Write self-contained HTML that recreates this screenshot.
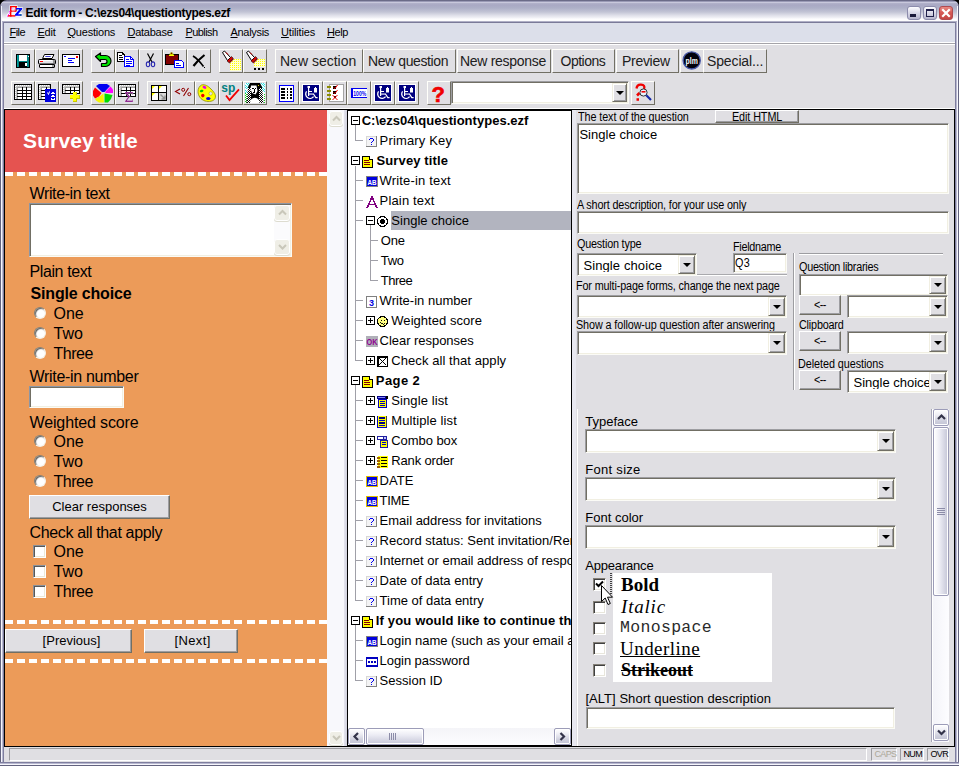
<!DOCTYPE html>
<html><head><meta charset="utf-8"><title>Edit form</title>
<style>
*{box-sizing:border-box;margin:0;padding:0}
html,body{width:959px;height:766px;overflow:hidden}
body{position:relative;background:#e0dfe3;font-family:"Liberation Sans",sans-serif;color:#000;font-size:13px}
.a{position:absolute}
.t{white-space:pre}
svg{display:block;position:absolute;overflow:visible}
.px{shape-rendering:crispEdges}
/* raised toolbar button */
.tb{background:#e0dfe3;border:1px solid;border-color:#fffffa #716f64 #716f64 #fffffa}
/* sunken field */
.sunk{background:#fff;border:1px solid;border-color:#9d9da1 #fbfbf6 #fbfbf6 #9d9da1;box-shadow:inset 1px 1px 0 #716f64, inset -1px -1px 0 #f1efe2}
/* classic raised push button */
.btn{background:#e0dfe3;border:1px solid;border-color:#fff #716f64 #716f64 #fff;box-shadow:inset -1px -1px 0 #9d9da1}
/* combo drop button */
.dd{background:#e0dfe3;border:1px solid;border-color:#f1efe2 #716f64 #716f64 #f1efe2;box-shadow:inset 1px 1px 0 #fff, inset -1px -1px 0 #9d9da1}
.dd:after{content:"";position:absolute;left:50%;top:50%;margin:-2px 0 0 -4px;border:4px solid transparent;border-top:4px solid #000;border-bottom:0;width:0;height:0}
u{text-decoration:underline}

</style></head>
<body>
<div class="a" style="left:0px;top:0px;width:959px;height:8px;background:#000"></div>
<div class="a" style="left:0px;top:0px;width:959px;height:23px;border-radius:7px 7px 0 0;background:linear-gradient(to bottom,#6b6b88 0px,#6b6b88 1px,#9a9ab6 1px,#9a9ab6 2px,#c8c8dc 2px,#c8c8dc 3px,#b2b2cb 3px,#a9a9c4 5px,#aeb0c8 8px,#c2c4d5 12px,#dcdde7 15px,#f2f2f7 18px,#fdfdfe 19px,#fdfdfe 21px,#b0b0c6 21px,#b0b0c6 22px,#7a7a98 22px,#7a7a98 23px)"></div>
<svg class="a" style="left:0;top:0" width="24" height="22" viewBox="0 0 24 22"><path d="M9.5 5.2H17.6V7.2H22.8V9.8L20 12.5H22.2V16.4H15.5V17.2H6.6V15L9.5 11.5Z" fill="#fff" opacity=".92"/><rect x="10" y="6" width="7" height="1.5" fill="#ff0000"/><rect x="10" y="6" width="1.6" height="10.6" fill="#ff0000"/><rect x="15.2" y="7" width="1.5" height="4.4" fill="#ff0000"/><rect x="11" y="10.4" width="5.2" height="1.4" fill="#ff0000"/><rect x="8" y="15.1" width="7.4" height="1.5" fill="#ff0000"/><rect x="11.6" y="7.5" width="3.6" height="2.9" fill="#e6e6ee"/><rect x="11.6" y="11.8" width="3" height="3.3" fill="#f4f4f8"/><rect x="7" y="15.6" width="1" height="1" fill="#ff00ff"/><rect x="8" y="14.2" width="1" height="1" fill="#ff00ff"/><rect x="9" y="12.6" width="1" height="1" fill="#ff00ff"/><rect x="9.3" y="11" width="1" height="1" fill="#ff00ff"/><rect x="11.2" y="8.2" width="1" height="1" fill="#ff00ff"/><rect x="14.6" y="9.4" width="1" height="1" fill="#ff00ff"/><path d="M16 8H22.2V9.3L18 14.2H21.6V15.7H15V14.4L19.3 9.5H16Z" fill="#0000ff"/><rect x="20.2" y="14.3" width="1.2" height="1.4" fill="#008060"/><rect x="16.2" y="9.4" width="1" height="1" fill="#008060"/><rect x="19.6" y="9.5" width="1" height="1" fill="#008060"/></svg>
<div class="a t" style="left:25.5px;top:6.84px;font-size:12px;line-height:12px;font-weight:bold;letter-spacing:-0.32px;">Edit form - C:\ezs04\questiontypes.ezf</div>
<div class="a" style="left:907px;top:6px;width:14px;height:14px;border:1px solid #8c8cac;border-radius:3px;background:linear-gradient(to bottom,#fdfdff 0%,#dcdcea 45%,#b4b4cc 100%)"></div>
<div class="a" style="left:910px;top:14px;width:6px;height:3px;background:#1a1a3a"></div>
<div class="a" style="left:923px;top:6px;width:14px;height:14px;border:1px solid #8c8cac;border-radius:3px;background:linear-gradient(to bottom,#fdfdff 0%,#dcdcea 45%,#b4b4cc 100%)"></div>
<div class="a" style="left:926px;top:9px;width:8px;height:8px;border:1px solid #20204a;border-top-width:2px"></div>
<div class="a" style="left:939px;top:6px;width:14px;height:14px;border:1px solid #b04a50;border-radius:3px;background:linear-gradient(to bottom,#e88a84 0%,#d65a56 45%,#c44442 100%)"></div>
<svg class="a" style="left:942px;top:9px" width="8" height="8" viewBox="0 0 8 8"><path d="M1 1L7 7M7 1L1 7" stroke="#fff" stroke-width="2.2" stroke-linecap="square"/></svg>
<div class="a" style="left:4px;top:23px;width:951px;height:19px;background:#dcdfea"></div>
<div class="a t" style="left:9.5px;top:26.69px;font-size:11px;line-height:11px;color:#000;letter-spacing:-0.55px;"><u>F</u>ile</div>
<div class="a t" style="left:37.5px;top:26.69px;font-size:11px;line-height:11px;color:#000;letter-spacing:-0.25px;"><u>E</u>dit</div>
<div class="a t" style="left:67.5px;top:26.69px;font-size:11px;line-height:11px;color:#000;letter-spacing:-0.22px;"><u>Q</u>uestions</div>
<div class="a t" style="left:127.5px;top:26.69px;font-size:11px;line-height:11px;color:#000;letter-spacing:-0.26px;"><u>D</u>atabase</div>
<div class="a t" style="left:185.5px;top:26.69px;font-size:11px;line-height:11px;color:#000;letter-spacing:-0.58px;"><u>P</u>ublish</div>
<div class="a t" style="left:230.5px;top:26.69px;font-size:11px;line-height:11px;color:#000;letter-spacing:-0.3px;"><u>A</u>nalysis</div>
<div class="a t" style="left:281px;top:26.69px;font-size:11px;line-height:11px;color:#000;letter-spacing:-0.16px;"><u>U</u>tilities</div>
<div class="a t" style="left:327px;top:26.69px;font-size:11px;line-height:11px;color:#000;letter-spacing:-0.4px;"><u>H</u>elp</div>
<div class="a" style="left:4px;top:42px;width:951px;height:1px;background:#fff"></div>
<div class="a" style="left:4px;top:43px;width:951px;height:1px;background:#a4a3a8"></div>
<div class="a" style="left:4px;top:44px;width:951px;height:1px;background:#fff"></div>
<div class="a" style="left:0px;top:5px;width:1px;height:761px;background:#63637f"></div>
<div class="a" style="left:1px;top:6px;width:1px;height:760px;background:#f6f6fc"></div>
<div class="a" style="left:2px;top:22px;width:1px;height:744px;background:#b8b8d0"></div>
<div class="a" style="left:3px;top:22px;width:1px;height:744px;background:#7e7e9e"></div>
<div class="a" style="left:955px;top:22px;width:1px;height:744px;background:#7e7e9e"></div>
<div class="a" style="left:956px;top:22px;width:1px;height:744px;background:#b8b8d0"></div>
<div class="a" style="left:957px;top:6px;width:1px;height:760px;background:#f6f6fc"></div>
<div class="a" style="left:958px;top:5px;width:1px;height:761px;background:#63637f"></div>
<div class="a" style="left:0px;top:762px;width:959px;height:1px;background:#7e7e9e"></div>
<div class="a" style="left:0px;top:763px;width:959px;height:1px;background:#b8b8d0"></div>
<div class="a" style="left:0px;top:764px;width:959px;height:1px;background:#f6f6fc"></div>
<div class="a" style="left:0px;top:765px;width:959px;height:1px;background:#63637f"></div>
<div class="a" style="left:4px;top:747px;width:951px;height:15px;background:#e0dfe3"></div>
<div class="a" style="left:9px;top:748px;width:858px;height:13px;border:1px solid;border-color:#9d9da1 #fff #fff #9d9da1"></div>
<div class="a" style="left:871px;top:748px;width:26px;height:13px;border:1px solid;border-color:#9d9da1 #fff #fff #9d9da1"></div>
<div class="a t" style="left:874.5px;top:749.88px;font-size:9px;line-height:9px;color:#aca899;letter-spacing:-0.65px;">CAPS</div>
<div class="a" style="left:900px;top:748px;width:24px;height:13px;border:1px solid;border-color:#9d9da1 #fff #fff #9d9da1"></div>
<div class="a t" style="left:903.5px;top:749.88px;font-size:9px;line-height:9px;color:#000;letter-spacing:-0.65px;">NUM</div>
<div class="a" style="left:927px;top:748px;width:22px;height:13px;border:1px solid;border-color:#9d9da1 #fff #fff #9d9da1"></div>
<div class="a t" style="left:930.5px;top:749.88px;font-size:9px;line-height:9px;color:#000;letter-spacing:-0.65px;">OVR</div>
<div class="a tb" style="left:11px;top:49px;width:24px;height:24px;"><svg class="px" style="left:-1px;top:-1px" width="24" height="24" viewBox="11 49 24 24"><rect x="16" y="54" width="14" height="14" fill="#000"/><rect x="17" y="55" width="12" height="12" fill="#008484"/><rect x="19" y="55" width="8" height="6" fill="#fff"/><rect x="19" y="62" width="8" height="5" fill="#000"/><rect x="25" y="63" width="2" height="3" fill="#fff"/><rect x="28" y="56" width="1" height="1" fill="#fff"/><rect x="17" y="55" width="1" height="12" fill="#00a0a0"/></svg></div>
<div class="a tb" style="left:35px;top:49px;width:24px;height:24px;"><svg class="" style="left:-1px;top:-1px" width="24" height="24" viewBox="35 49 24 24"><path d="M44.5 54.5H54L52 58.5H42.5Z" fill="#fff" stroke="#000" stroke-width="1" /><path d="M45.5 57L46.5 56L47.5 57L48.5 56L49.5 57L50.5 56" fill="none" stroke="#0000c0" stroke-width="1" /><path d="M39.5 59.5H54.5Q55.5 59.5 55.5 60.5V63Q55.5 64 54.5 64H39.5Q38.5 64 38.5 63V60.5Q38.5 59.5 39.5 59.5Z" fill="#e4e4e8" stroke="#000" stroke-width="1" /><rect x="40" y="60" width="12" height="1" fill="#fff"/><rect x="40" y="61" width="3" height="1" fill="#ff0000"/><rect x="53" y="60" width="2" height="3" fill="#909090"/><path d="M40 64.5H54Q54.5 64.5 54.5 65V67Q54.5 67.5 54 67.5H40Q39.5 67.5 39.5 67V65Q39.5 64.5 40 64.5Z" fill="#fff" stroke="#000" stroke-width="1" /><rect x="52" y="65" width="2" height="2" fill="#a0a0a0"/></svg></div>
<div class="a tb" style="left:59px;top:49px;width:24px;height:24px;"><svg class="px" style="left:-1px;top:-1px" width="24" height="24" viewBox="59 49 24 24"><rect x="62" y="54" width="18" height="13" fill="#000"/><rect x="63" y="55" width="16" height="11" fill="#fff"/><rect x="64" y="56" width="2" height="1" fill="#0000ff"/><rect x="76" y="56" width="2" height="2" fill="#ff0000"/><rect x="68" y="58" width="7" height="1" fill="#0000ff"/><rect x="68" y="60" width="4" height="1" fill="#0000ff"/><rect x="68" y="62" width="6" height="1" fill="#0000ff"/></svg></div>
<div class="a tb" style="left:91px;top:49px;width:24px;height:24px;"><svg class="" style="left:-1px;top:-1px" width="24" height="24" viewBox="91 49 24 24"><path d="M95.5 56.5L100.5 53V55.5H105.5A4.7 4.7 0 0 1 105.5 66.5H101.5V63.5H105A1.9 1.9 0 0 0 105 59.5H100.5V61.5Z" fill="#00e400" stroke="#000" stroke-width="1.2" stroke-linejoin="round"/></svg></div>
<div class="a tb" style="left:115px;top:49px;width:24px;height:24px;"><svg class="" style="left:-1px;top:-1px" width="24" height="24" viewBox="115 49 24 24"><rect x="117" y="52" width="8" height="10" fill="#000"/><rect x="118" y="53" width="6" height="8" fill="#fff"/><path d="M122 52H125V55Z" fill="#e0dfe3" /><path d="M122.5 52.5V54.5H124.5" fill="none" stroke="#000" stroke-width="1" /><path d="M122 52L125 55" fill="none" stroke="#000" stroke-width="1" /><rect x="119" y="55" width="3" height="1" fill="#000"/><rect x="119" y="57" width="4" height="1" fill="#000"/><rect x="119" y="59" width="4" height="1" fill="#000"/><rect x="124" y="56" width="10" height="11" fill="#0000ff"/><rect x="125" y="57" width="8" height="9" fill="#fff"/><path d="M130 56H134V60Z" fill="#e0dfe3" /><path d="M130.5 56.5V59.5H133.5" fill="none" stroke="#0000ff" stroke-width="1" /><path d="M130 56L134 60" fill="none" stroke="#0000ff" stroke-width="1" /><rect x="126" y="59" width="3" height="1" fill="#0000ff"/><rect x="126" y="61" width="6" height="1" fill="#0000ff"/><rect x="126" y="63" width="6" height="1" fill="#0000ff"/><rect x="126" y="65" width="4" height="1" fill="#0000ff"/></svg></div>
<div class="a tb" style="left:139px;top:49px;width:24px;height:24px;"><svg class="" style="left:-1px;top:-1px" width="24" height="24" viewBox="139 49 24 24"><path d="M147.5 53.5L152 62M153.5 53.5L149 62" fill="none" stroke="#000" stroke-width="1.2" /><ellipse cx="148" cy="64.3" rx="1.7" ry="2.4" fill="none" stroke="#2828b0" stroke-width="1.1"/><ellipse cx="153" cy="64.3" rx="1.7" ry="2.4" fill="none" stroke="#2828b0" stroke-width="1.1"/></svg></div>
<div class="a tb" style="left:163px;top:49px;width:24px;height:24px;"><svg class="" style="left:-1px;top:-1px" width="24" height="24" viewBox="163 49 24 24"><rect x="165" y="54" width="14" height="11" fill="#000"/><rect x="166" y="55" width="12" height="9" fill="#800000"/><path d="M169 55L171.5 52L174 55Z" fill="#ffff00" stroke="#606000" stroke-width="0.6" /><rect x="169" y="55" width="5" height="1" fill="#ffff00"/><rect x="171" y="53" width="1" height="1" fill="#800000"/><rect x="174" y="60" width="10" height="8" fill="#0000ff"/><rect x="175" y="61" width="8" height="6" fill="#fff"/><path d="M181 60H184V63Z" fill="#e0dfe3" /><path d="M181 60L184 63" fill="none" stroke="#0000ff" stroke-width="1" /><rect x="176" y="63" width="3" height="1" fill="#0000ff"/><rect x="176" y="65" width="5" height="1" fill="#0000ff"/></svg></div>
<div class="a tb" style="left:187px;top:49px;width:24px;height:24px;"><svg class="" style="left:-1px;top:-1px" width="24" height="24" viewBox="187 49 24 24"><path d="M193 56Q198 59 203.5 66.5" fill="none" stroke="#000" stroke-width="1.6" /><path d="M204.5 55Q198 60 193.5 66" fill="none" stroke="#000" stroke-width="2.2" /><rect x="204" y="67" width="1" height="1" fill="#000"/></svg></div>
<div class="a tb" style="left:219px;top:49px;width:24px;height:24px;"><svg class="" style="left:-1px;top:-1px" width="24" height="24" viewBox="219 49 24 24"><rect x="230" y="59" width="11" height="12" fill="#ffffd0"/><rect x="230" y="59" width="1" height="1" fill="#ffff00"/><rect x="230" y="61" width="1" height="1" fill="#ffff00"/><rect x="230" y="63" width="1" height="1" fill="#ffff00"/><rect x="230" y="65" width="1" height="1" fill="#ffff00"/><rect x="230" y="67" width="1" height="1" fill="#ffff00"/><rect x="230" y="69" width="1" height="1" fill="#ffff00"/><rect x="232" y="59" width="1" height="1" fill="#ffff00"/><rect x="232" y="61" width="1" height="1" fill="#ffff00"/><rect x="232" y="63" width="1" height="1" fill="#ffff00"/><rect x="232" y="65" width="1" height="1" fill="#ffff00"/><rect x="232" y="67" width="1" height="1" fill="#ffff00"/><rect x="232" y="69" width="1" height="1" fill="#ffff00"/><rect x="234" y="59" width="1" height="1" fill="#ffff00"/><rect x="234" y="61" width="1" height="1" fill="#ffff00"/><rect x="234" y="63" width="1" height="1" fill="#ffff00"/><rect x="234" y="65" width="1" height="1" fill="#ffff00"/><rect x="234" y="67" width="1" height="1" fill="#ffff00"/><rect x="234" y="69" width="1" height="1" fill="#ffff00"/><rect x="236" y="59" width="1" height="1" fill="#ffff00"/><rect x="236" y="61" width="1" height="1" fill="#ffff00"/><rect x="236" y="63" width="1" height="1" fill="#ffff00"/><rect x="236" y="65" width="1" height="1" fill="#ffff00"/><rect x="236" y="67" width="1" height="1" fill="#ffff00"/><rect x="236" y="69" width="1" height="1" fill="#ffff00"/><rect x="238" y="59" width="1" height="1" fill="#ffff00"/><rect x="238" y="61" width="1" height="1" fill="#ffff00"/><rect x="238" y="63" width="1" height="1" fill="#ffff00"/><rect x="238" y="65" width="1" height="1" fill="#ffff00"/><rect x="238" y="67" width="1" height="1" fill="#ffff00"/><rect x="238" y="69" width="1" height="1" fill="#ffff00"/><rect x="240" y="59" width="1" height="1" fill="#ffff00"/><rect x="240" y="61" width="1" height="1" fill="#ffff00"/><rect x="240" y="63" width="1" height="1" fill="#ffff00"/><rect x="240" y="65" width="1" height="1" fill="#ffff00"/><rect x="240" y="67" width="1" height="1" fill="#ffff00"/><rect x="240" y="69" width="1" height="1" fill="#ffff00"/><path d="M222.5 52.5L224.5 51L230.5 57.5L227.5 60.5Z" fill="#fff" stroke="#000" stroke-width="1" /><path d="M227 61L231.5 56.5L233 58L229 62.5Z" fill="#e00000" stroke="#000" stroke-width="0.5" /><path d="M229 62.5L233 58L234 59L229.5 63.5Z" fill="#800000" /><path d="M226 52.5L228 54.5" fill="none" stroke="#e00000" stroke-width="1" /></svg></div>
<div class="a tb" style="left:243px;top:49px;width:24px;height:24px;"><svg class="" style="left:-1px;top:-1px" width="24" height="24" viewBox="243 49 24 24"><rect x="254" y="59" width="11" height="12" fill="#ffffd0"/><rect x="254" y="59" width="1" height="1" fill="#ffff00"/><rect x="254" y="61" width="1" height="1" fill="#ffff00"/><rect x="254" y="63" width="1" height="1" fill="#ffff00"/><rect x="254" y="65" width="1" height="1" fill="#ffff00"/><rect x="254" y="67" width="1" height="1" fill="#ffff00"/><rect x="254" y="69" width="1" height="1" fill="#ffff00"/><rect x="256" y="59" width="1" height="1" fill="#ffff00"/><rect x="256" y="61" width="1" height="1" fill="#ffff00"/><rect x="256" y="63" width="1" height="1" fill="#ffff00"/><rect x="256" y="65" width="1" height="1" fill="#ffff00"/><rect x="256" y="67" width="1" height="1" fill="#ffff00"/><rect x="256" y="69" width="1" height="1" fill="#ffff00"/><rect x="258" y="59" width="1" height="1" fill="#ffff00"/><rect x="258" y="61" width="1" height="1" fill="#ffff00"/><rect x="258" y="63" width="1" height="1" fill="#ffff00"/><rect x="258" y="65" width="1" height="1" fill="#ffff00"/><rect x="258" y="67" width="1" height="1" fill="#ffff00"/><rect x="258" y="69" width="1" height="1" fill="#ffff00"/><rect x="260" y="59" width="1" height="1" fill="#ffff00"/><rect x="260" y="61" width="1" height="1" fill="#ffff00"/><rect x="260" y="63" width="1" height="1" fill="#ffff00"/><rect x="260" y="65" width="1" height="1" fill="#ffff00"/><rect x="260" y="67" width="1" height="1" fill="#ffff00"/><rect x="260" y="69" width="1" height="1" fill="#ffff00"/><rect x="262" y="59" width="1" height="1" fill="#ffff00"/><rect x="262" y="61" width="1" height="1" fill="#ffff00"/><rect x="262" y="63" width="1" height="1" fill="#ffff00"/><rect x="262" y="65" width="1" height="1" fill="#ffff00"/><rect x="262" y="67" width="1" height="1" fill="#ffff00"/><rect x="262" y="69" width="1" height="1" fill="#ffff00"/><rect x="264" y="59" width="1" height="1" fill="#ffff00"/><rect x="264" y="61" width="1" height="1" fill="#ffff00"/><rect x="264" y="63" width="1" height="1" fill="#ffff00"/><rect x="264" y="65" width="1" height="1" fill="#ffff00"/><rect x="264" y="67" width="1" height="1" fill="#ffff00"/><rect x="264" y="69" width="1" height="1" fill="#ffff00"/><rect x="254" y="67" width="11" height="4" fill="#e0dfe3"/><path d="M246.5 52.5L248.5 51L254.5 57.5L251.5 60.5Z" fill="#fff" stroke="#000" stroke-width="1" /><path d="M251 61L255.5 56.5L257 58L253 62.5Z" fill="#e00000" stroke="#000" stroke-width="0.5" /><path d="M253 62.5L257 58L258 59L253.5 63.5Z" fill="#800000" /><path d="M250 52.5L252 54.5" fill="none" stroke="#e00000" stroke-width="1" /><rect x="254" y="68" width="2" height="2" fill="#000"/><rect x="258" y="68" width="2" height="2" fill="#000"/><rect x="262" y="68" width="2" height="2" fill="#000"/></svg></div>
<div class="a tb" style="left:11px;top:81px;width:24px;height:24px;"><svg class="px" style="left:-1px;top:-1px" width="24" height="24" viewBox="11 81 24 24"><rect x="14" y="84" width="18" height="16" fill="#000"/><rect x="15" y="85" width="16" height="14" fill="#fff"/><rect x="15" y="85" width="16" height="2" fill="#c4c4c4"/><rect x="15" y="85" width="2" height="14" fill="#c4c4c4"/><rect x="16" y="85" width="1" height="1" fill="#fff"/><rect x="18" y="85" width="1" height="1" fill="#fff"/><rect x="20" y="85" width="1" height="1" fill="#fff"/><rect x="22" y="85" width="1" height="1" fill="#fff"/><rect x="24" y="85" width="1" height="1" fill="#fff"/><rect x="26" y="85" width="1" height="1" fill="#fff"/><rect x="28" y="85" width="1" height="1" fill="#fff"/><rect x="30" y="85" width="1" height="1" fill="#fff"/><rect x="15" y="86" width="1" height="1" fill="#fff"/><rect x="15" y="88" width="1" height="1" fill="#fff"/><rect x="15" y="90" width="1" height="1" fill="#fff"/><rect x="15" y="92" width="1" height="1" fill="#fff"/><rect x="15" y="94" width="1" height="1" fill="#fff"/><rect x="15" y="96" width="1" height="1" fill="#fff"/><rect x="15" y="98" width="1" height="1" fill="#fff"/><rect x="17" y="87" width="1" height="12" fill="#a0a0a0"/><rect x="17" y="87" width="14" height="1" fill="#a0a0a0"/><rect x="22" y="87" width="1" height="12" fill="#000"/><rect x="26" y="87" width="1" height="12" fill="#000"/><rect x="17" y="90" width="14" height="1" fill="#000"/><rect x="17" y="93" width="14" height="1" fill="#000"/><rect x="17" y="96" width="14" height="1" fill="#000"/></svg></div>
<div class="a tb" style="left:35px;top:81px;width:24px;height:24px;"><svg class="" style="left:-1px;top:-1px" width="24" height="24" viewBox="35 81 24 24"><rect x="38" y="84" width="13" height="16" fill="#000"/><rect x="39" y="85" width="11" height="14" fill="#fff"/><rect x="39" y="85" width="11" height="2" fill="#c4c4c4"/><rect x="39" y="85" width="2" height="14" fill="#c4c4c4"/><rect x="40" y="85" width="1" height="1" fill="#fff"/><rect x="42" y="85" width="1" height="1" fill="#fff"/><rect x="44" y="85" width="1" height="1" fill="#fff"/><rect x="46" y="85" width="1" height="1" fill="#fff"/><rect x="48" y="85" width="1" height="1" fill="#fff"/><rect x="39" y="86" width="1" height="1" fill="#fff"/><rect x="39" y="88" width="1" height="1" fill="#fff"/><rect x="39" y="90" width="1" height="1" fill="#fff"/><rect x="39" y="92" width="1" height="1" fill="#fff"/><rect x="39" y="94" width="1" height="1" fill="#fff"/><rect x="39" y="96" width="1" height="1" fill="#fff"/><rect x="39" y="98" width="1" height="1" fill="#fff"/><rect x="41" y="87" width="1" height="12" fill="#a0a0a0"/><rect x="41" y="87" width="9" height="1" fill="#a0a0a0"/><rect x="46" y="87" width="1" height="12" fill="#000"/><rect x="41" y="90" width="9" height="1" fill="#000"/><rect x="41" y="93" width="9" height="1" fill="#000"/><rect x="41" y="96" width="9" height="1" fill="#000"/><rect x="45" y="89" width="11" height="13" fill="#0000e0"/><path d="M47.5 92.5L48.5 94.5L49.5 91.5" fill="none" stroke="#fff" stroke-width="1" /><rect x="51" y="93" width="4" height="1" fill="#fff"/><rect x="52" y="92" width="2" height="1" fill="#fff"/><rect x="51" y="96" width="4" height="1" fill="#fff"/><rect x="52" y="95" width="2" height="1" fill="#fff"/><rect x="51" y="99" width="4" height="1" fill="#fff"/><rect x="51" y="98" width="1" height="1" fill="#fff"/><rect x="54" y="98" width="1" height="1" fill="#fff"/></svg></div>
<div class="a tb" style="left:59px;top:81px;width:24px;height:24px;"><svg class="px" style="left:-1px;top:-1px" width="24" height="24" viewBox="59 81 24 24"><rect x="62" y="84" width="18" height="10" fill="#000"/><rect x="63" y="85" width="16" height="8" fill="#fff"/><rect x="63" y="85" width="16" height="2" fill="#c4c4c4"/><rect x="63" y="85" width="2" height="8" fill="#c4c4c4"/><rect x="64" y="85" width="1" height="1" fill="#fff"/><rect x="66" y="85" width="1" height="1" fill="#fff"/><rect x="68" y="85" width="1" height="1" fill="#fff"/><rect x="70" y="85" width="1" height="1" fill="#fff"/><rect x="72" y="85" width="1" height="1" fill="#fff"/><rect x="74" y="85" width="1" height="1" fill="#fff"/><rect x="76" y="85" width="1" height="1" fill="#fff"/><rect x="78" y="85" width="1" height="1" fill="#fff"/><rect x="63" y="86" width="1" height="1" fill="#fff"/><rect x="63" y="88" width="1" height="1" fill="#fff"/><rect x="63" y="90" width="1" height="1" fill="#fff"/><rect x="63" y="92" width="1" height="1" fill="#fff"/><rect x="65" y="87" width="1" height="6" fill="#a0a0a0"/><rect x="65" y="87" width="14" height="1" fill="#a0a0a0"/><rect x="70" y="87" width="1" height="6" fill="#000"/><rect x="74" y="87" width="1" height="6" fill="#000"/><rect x="65" y="90" width="14" height="1" fill="#000"/><rect x="73" y="92" width="4" height="10" fill="#c8c800"/><rect x="70" y="95" width="10" height="4" fill="#c8c800"/><rect x="73" y="92" width="3" height="9" fill="#ffff00"/><rect x="70" y="95" width="9" height="3" fill="#ffff00"/></svg></div>
<div class="a tb" style="left:91px;top:81px;width:24px;height:24px;"><svg class="" style="left:-1px;top:-1px" width="24" height="24" viewBox="91 81 24 24"><path d="M96 86L99 84H107L110 86L104.5 92H102Z" fill="#0000f0" /><path d="M110.5 86.5L113 89.5V93H106L105 92Z" fill="#ff00ff" /><path d="M95 87.5L101.5 93L99 96.5L95 98.5L93 95.5V91Z" fill="#ff0000" /><path d="M100 96L103.5 93.5L104 102.5H99L96 100.5L95 99Z" fill="#f4f400" /><path d="M104.5 93.5L112.5 95L111 99L108 102.5H104.5Z" fill="#00dc00" /></svg></div>
<div class="a tb" style="left:115px;top:81px;width:24px;height:24px;"><svg class="" style="left:-1px;top:-1px" width="24" height="24" viewBox="115 81 24 24"><rect x="118" y="84" width="18" height="13" fill="#000"/><rect x="119" y="85" width="16" height="11" fill="#fff"/><rect x="119" y="85" width="16" height="2" fill="#c4c4c4"/><rect x="119" y="85" width="2" height="11" fill="#c4c4c4"/><rect x="120" y="85" width="1" height="1" fill="#fff"/><rect x="122" y="85" width="1" height="1" fill="#fff"/><rect x="124" y="85" width="1" height="1" fill="#fff"/><rect x="126" y="85" width="1" height="1" fill="#fff"/><rect x="128" y="85" width="1" height="1" fill="#fff"/><rect x="130" y="85" width="1" height="1" fill="#fff"/><rect x="132" y="85" width="1" height="1" fill="#fff"/><rect x="134" y="85" width="1" height="1" fill="#fff"/><rect x="119" y="86" width="1" height="1" fill="#fff"/><rect x="119" y="88" width="1" height="1" fill="#fff"/><rect x="119" y="90" width="1" height="1" fill="#fff"/><rect x="119" y="92" width="1" height="1" fill="#fff"/><rect x="119" y="94" width="1" height="1" fill="#fff"/><rect x="121" y="87" width="1" height="9" fill="#a0a0a0"/><rect x="121" y="87" width="14" height="1" fill="#a0a0a0"/><rect x="126" y="87" width="1" height="9" fill="#000"/><rect x="130" y="87" width="1" height="9" fill="#000"/><rect x="121" y="90" width="14" height="1" fill="#000"/><rect x="121" y="93" width="14" height="1" fill="#000"/><path d="M125 92H133V94.5H132.3V93.3H127.3L130 96.5L127 100.5H132.3V99.3H133V102H125V101.3L128.3 96.8L125 92.7Z" fill="#800080" stroke="#e0dfe3" stroke-width="0.4" /></svg></div>
<div class="a tb" style="left:147px;top:81px;width:24px;height:24px;"><svg class="" style="left:-1px;top:-1px" width="24" height="24" viewBox="147 81 24 24"><rect x="151" y="85" width="16" height="16" fill="#000"/><rect x="152" y="86" width="6" height="6" fill="#fff"/><rect x="159" y="86" width="7" height="6" fill="#fff"/><rect x="152" y="93" width="6" height="7" fill="#fff"/><rect x="159" y="93" width="7" height="7" fill="#d8d8d8"/><path d="M152 86H155L152 89Z M159 86H162L159 89Z M152 93H155L152 96Z" fill="#ffff00" /><path d="M160.5 94.5L164.5 98.5M165 95.5V99H161.5" fill="none" stroke="#909090" stroke-width="1.4" /></svg></div>
<div class="a tb" style="left:171px;top:81px;width:24px;height:24px;"><svg class="" style="left:-1px;top:-1px" width="24" height="24" viewBox="171 81 24 24"><path d="M180 89L175.5 91.5L180 94" fill="none" stroke="#900000" stroke-width="1.1" /><circle cx="183.2" cy="89.8" r="1.5" fill="none" stroke="#900000" stroke-width="1"/><circle cx="189.3" cy="94.2" r="1.5" fill="none" stroke="#900000" stroke-width="1"/><path d="M188.5 88L183.5 96" fill="none" stroke="#900000" stroke-width="1.1" /></svg></div>
<div class="a tb" style="left:195px;top:81px;width:24px;height:24px;"><svg class="" style="left:-1px;top:-1px" width="24" height="24" viewBox="195 81 24 24"><path d="M201.5 85C205 84 208 86 211 89C214 92 216.5 95 215 98.5C213.5 101.5 209 102 205 101C200.5 99.5 198 95.5 198 91.5C198 88.5 199.5 86 201.5 85Z" fill="#ffff00" stroke="#8c8c00" stroke-width="0.8" /><ellipse cx="204.5" cy="87.3" rx="2" ry="1.4" fill="#e800e8" transform="rotate(25 204.5 87.3)"/><ellipse cx="201.6" cy="91" rx="1.9" ry="1.2" fill="#00c800" transform="rotate(-15 201.6 91)"/><ellipse cx="202.8" cy="95.6" rx="1.7" ry="1.8" fill="#f00000"/><ellipse cx="208.3" cy="98.6" rx="2.2" ry="1.5" fill="#0000f0"/><ellipse cx="210.7" cy="93.5" rx="1.7" ry="1.8" fill="#e4e4ec" stroke="#a0a000" stroke-width=".5"/></svg></div>
<div class="a tb" style="left:219px;top:81px;width:24px;height:24px;"><svg class="" style="left:-1px;top:-1px" width="24" height="24" viewBox="219 81 24 24"><text x="221.3" y="91.6" font-family="Liberation Sans" font-weight="bold" font-size="12.5" fill="#008080" textLength="14" lengthAdjust="spacingAndGlyphs">sp</text><path d="M226 95.5L229.5 100L239 89.3" fill="none" stroke="#f00000" stroke-width="1.8" /></svg></div>
<div class="a tb" style="left:243px;top:81px;width:24px;height:24px;"><svg class="" style="left:-1px;top:-1px" width="24" height="24" viewBox="243 81 24 24"><rect x="245" y="83" width="20" height="20" fill="#f4fbfb"/><rect x="245" y="85" width="1" height="1" fill="#30e0e0"/><rect x="245" y="87" width="1" height="1" fill="#30e0e0"/><rect x="245" y="90" width="1" height="1" fill="#30e0e0"/><rect x="245" y="92" width="1" height="1" fill="#30e0e0"/><rect x="246" y="83" width="1" height="1" fill="#30e0e0"/><rect x="246" y="86" width="1" height="1" fill="#30e0e0"/><rect x="246" y="88" width="1" height="1" fill="#30e0e0"/><rect x="246" y="91" width="1" height="1" fill="#30e0e0"/><rect x="247" y="84" width="1" height="1" fill="#30e0e0"/><rect x="247" y="87" width="1" height="1" fill="#30e0e0"/><rect x="247" y="89" width="1" height="1" fill="#30e0e0"/><rect x="247" y="92" width="1" height="1" fill="#30e0e0"/><rect x="248" y="83" width="1" height="1" fill="#30e0e0"/><rect x="248" y="85" width="1" height="1" fill="#30e0e0"/><rect x="248" y="88" width="1" height="1" fill="#30e0e0"/><rect x="248" y="90" width="1" height="1" fill="#30e0e0"/><rect x="249" y="84" width="1" height="1" fill="#30e0e0"/><rect x="249" y="86" width="1" height="1" fill="#30e0e0"/><rect x="249" y="89" width="1" height="1" fill="#30e0e0"/><rect x="249" y="91" width="1" height="1" fill="#30e0e0"/><rect x="250" y="85" width="1" height="1" fill="#30e0e0"/><rect x="250" y="87" width="1" height="1" fill="#30e0e0"/><rect x="250" y="90" width="1" height="1" fill="#30e0e0"/><rect x="250" y="92" width="1" height="1" fill="#30e0e0"/><rect x="251" y="83" width="1" height="1" fill="#30e0e0"/><rect x="251" y="86" width="1" height="1" fill="#30e0e0"/><rect x="251" y="88" width="1" height="1" fill="#30e0e0"/><rect x="251" y="91" width="1" height="1" fill="#30e0e0"/><rect x="252" y="84" width="1" height="1" fill="#30e0e0"/><rect x="252" y="87" width="1" height="1" fill="#30e0e0"/><rect x="252" y="89" width="1" height="1" fill="#30e0e0"/><rect x="252" y="92" width="1" height="1" fill="#30e0e0"/><rect x="253" y="83" width="1" height="1" fill="#30e0e0"/><rect x="253" y="85" width="1" height="1" fill="#30e0e0"/><rect x="253" y="88" width="1" height="1" fill="#30e0e0"/><rect x="253" y="90" width="1" height="1" fill="#30e0e0"/><rect x="254" y="84" width="1" height="1" fill="#30e0e0"/><rect x="254" y="86" width="1" height="1" fill="#30e0e0"/><rect x="254" y="89" width="1" height="1" fill="#30e0e0"/><rect x="254" y="91" width="1" height="1" fill="#30e0e0"/><rect x="255" y="85" width="1" height="1" fill="#30e0e0"/><rect x="255" y="87" width="1" height="1" fill="#30e0e0"/><rect x="255" y="90" width="1" height="1" fill="#30e0e0"/><rect x="255" y="92" width="1" height="1" fill="#30e0e0"/><rect x="256" y="83" width="1" height="1" fill="#30e0e0"/><rect x="256" y="86" width="1" height="1" fill="#30e0e0"/><rect x="256" y="88" width="1" height="1" fill="#30e0e0"/><rect x="256" y="91" width="1" height="1" fill="#30e0e0"/><rect x="257" y="84" width="1" height="1" fill="#30e0e0"/><rect x="257" y="87" width="1" height="1" fill="#30e0e0"/><rect x="257" y="89" width="1" height="1" fill="#30e0e0"/><rect x="257" y="92" width="1" height="1" fill="#30e0e0"/><rect x="258" y="83" width="1" height="1" fill="#30e0e0"/><rect x="258" y="85" width="1" height="1" fill="#30e0e0"/><rect x="258" y="88" width="1" height="1" fill="#30e0e0"/><rect x="258" y="90" width="1" height="1" fill="#30e0e0"/><rect x="259" y="84" width="1" height="1" fill="#30e0e0"/><rect x="259" y="86" width="1" height="1" fill="#30e0e0"/><rect x="259" y="89" width="1" height="1" fill="#30e0e0"/><rect x="259" y="91" width="1" height="1" fill="#30e0e0"/><rect x="260" y="85" width="1" height="1" fill="#30e0e0"/><rect x="260" y="87" width="1" height="1" fill="#30e0e0"/><rect x="260" y="90" width="1" height="1" fill="#30e0e0"/><rect x="260" y="92" width="1" height="1" fill="#30e0e0"/><rect x="261" y="83" width="1" height="1" fill="#30e0e0"/><rect x="261" y="86" width="1" height="1" fill="#30e0e0"/><rect x="261" y="88" width="1" height="1" fill="#30e0e0"/><rect x="261" y="91" width="1" height="1" fill="#30e0e0"/><rect x="262" y="84" width="1" height="1" fill="#30e0e0"/><rect x="262" y="87" width="1" height="1" fill="#30e0e0"/><rect x="262" y="89" width="1" height="1" fill="#30e0e0"/><rect x="262" y="92" width="1" height="1" fill="#30e0e0"/><rect x="263" y="83" width="1" height="1" fill="#30e0e0"/><rect x="263" y="85" width="1" height="1" fill="#30e0e0"/><rect x="263" y="88" width="1" height="1" fill="#30e0e0"/><rect x="263" y="90" width="1" height="1" fill="#30e0e0"/><rect x="264" y="84" width="1" height="1" fill="#30e0e0"/><rect x="264" y="86" width="1" height="1" fill="#30e0e0"/><rect x="264" y="89" width="1" height="1" fill="#30e0e0"/><rect x="264" y="91" width="1" height="1" fill="#30e0e0"/><rect x="245" y="93" width="1" height="1" fill="#20d020"/><rect x="245" y="95" width="1" height="1" fill="#20d020"/><rect x="245" y="97" width="1" height="1" fill="#20d020"/><rect x="245" y="99" width="1" height="1" fill="#20d020"/><rect x="245" y="101" width="1" height="1" fill="#20d020"/><rect x="246" y="94" width="1" height="1" fill="#20d020"/><rect x="246" y="96" width="1" height="1" fill="#20d020"/><rect x="246" y="98" width="1" height="1" fill="#20d020"/><rect x="246" y="100" width="1" height="1" fill="#20d020"/><rect x="246" y="102" width="1" height="1" fill="#20d020"/><rect x="247" y="93" width="1" height="1" fill="#20d020"/><rect x="247" y="95" width="1" height="1" fill="#20d020"/><rect x="247" y="97" width="1" height="1" fill="#20d020"/><rect x="247" y="99" width="1" height="1" fill="#20d020"/><rect x="247" y="101" width="1" height="1" fill="#20d020"/><rect x="248" y="94" width="1" height="1" fill="#20d020"/><rect x="248" y="96" width="1" height="1" fill="#20d020"/><rect x="248" y="98" width="1" height="1" fill="#20d020"/><rect x="248" y="100" width="1" height="1" fill="#20d020"/><rect x="248" y="102" width="1" height="1" fill="#20d020"/><rect x="249" y="93" width="1" height="1" fill="#20d020"/><rect x="249" y="95" width="1" height="1" fill="#20d020"/><rect x="249" y="97" width="1" height="1" fill="#20d020"/><rect x="249" y="99" width="1" height="1" fill="#20d020"/><rect x="249" y="101" width="1" height="1" fill="#20d020"/><rect x="250" y="94" width="1" height="1" fill="#20d020"/><rect x="250" y="96" width="1" height="1" fill="#20d020"/><rect x="250" y="98" width="1" height="1" fill="#20d020"/><rect x="250" y="100" width="1" height="1" fill="#20d020"/><rect x="250" y="102" width="1" height="1" fill="#20d020"/><rect x="251" y="93" width="1" height="1" fill="#20d020"/><rect x="251" y="95" width="1" height="1" fill="#20d020"/><rect x="251" y="97" width="1" height="1" fill="#20d020"/><rect x="251" y="99" width="1" height="1" fill="#20d020"/><rect x="251" y="101" width="1" height="1" fill="#20d020"/><rect x="252" y="94" width="1" height="1" fill="#20d020"/><rect x="252" y="96" width="1" height="1" fill="#20d020"/><rect x="252" y="98" width="1" height="1" fill="#20d020"/><rect x="252" y="100" width="1" height="1" fill="#20d020"/><rect x="252" y="102" width="1" height="1" fill="#20d020"/><rect x="253" y="93" width="1" height="1" fill="#20d020"/><rect x="253" y="95" width="1" height="1" fill="#20d020"/><rect x="253" y="97" width="1" height="1" fill="#20d020"/><rect x="253" y="99" width="1" height="1" fill="#20d020"/><rect x="253" y="101" width="1" height="1" fill="#20d020"/><rect x="254" y="94" width="1" height="1" fill="#20d020"/><rect x="254" y="96" width="1" height="1" fill="#20d020"/><rect x="254" y="98" width="1" height="1" fill="#20d020"/><rect x="254" y="100" width="1" height="1" fill="#20d020"/><rect x="254" y="102" width="1" height="1" fill="#20d020"/><rect x="255" y="93" width="1" height="1" fill="#20d020"/><rect x="255" y="95" width="1" height="1" fill="#20d020"/><rect x="255" y="97" width="1" height="1" fill="#20d020"/><rect x="255" y="99" width="1" height="1" fill="#20d020"/><rect x="255" y="101" width="1" height="1" fill="#20d020"/><rect x="256" y="94" width="1" height="1" fill="#20d020"/><rect x="256" y="96" width="1" height="1" fill="#20d020"/><rect x="256" y="98" width="1" height="1" fill="#20d020"/><rect x="256" y="100" width="1" height="1" fill="#20d020"/><rect x="256" y="102" width="1" height="1" fill="#20d020"/><rect x="257" y="93" width="1" height="1" fill="#20d020"/><rect x="257" y="95" width="1" height="1" fill="#20d020"/><rect x="257" y="97" width="1" height="1" fill="#20d020"/><rect x="257" y="99" width="1" height="1" fill="#20d020"/><rect x="257" y="101" width="1" height="1" fill="#20d020"/><rect x="258" y="94" width="1" height="1" fill="#20d020"/><rect x="258" y="96" width="1" height="1" fill="#20d020"/><rect x="258" y="98" width="1" height="1" fill="#20d020"/><rect x="258" y="100" width="1" height="1" fill="#20d020"/><rect x="258" y="102" width="1" height="1" fill="#20d020"/><rect x="259" y="93" width="1" height="1" fill="#20d020"/><rect x="259" y="95" width="1" height="1" fill="#20d020"/><rect x="259" y="97" width="1" height="1" fill="#20d020"/><rect x="259" y="99" width="1" height="1" fill="#20d020"/><rect x="259" y="101" width="1" height="1" fill="#20d020"/><rect x="260" y="94" width="1" height="1" fill="#20d020"/><rect x="260" y="96" width="1" height="1" fill="#20d020"/><rect x="260" y="98" width="1" height="1" fill="#20d020"/><rect x="260" y="100" width="1" height="1" fill="#20d020"/><rect x="260" y="102" width="1" height="1" fill="#20d020"/><rect x="261" y="93" width="1" height="1" fill="#20d020"/><rect x="261" y="95" width="1" height="1" fill="#20d020"/><rect x="261" y="97" width="1" height="1" fill="#20d020"/><rect x="261" y="99" width="1" height="1" fill="#20d020"/><rect x="261" y="101" width="1" height="1" fill="#20d020"/><rect x="262" y="94" width="1" height="1" fill="#20d020"/><rect x="262" y="96" width="1" height="1" fill="#20d020"/><rect x="262" y="98" width="1" height="1" fill="#20d020"/><rect x="262" y="100" width="1" height="1" fill="#20d020"/><rect x="262" y="102" width="1" height="1" fill="#20d020"/><rect x="263" y="93" width="1" height="1" fill="#20d020"/><rect x="263" y="95" width="1" height="1" fill="#20d020"/><rect x="263" y="97" width="1" height="1" fill="#20d020"/><rect x="263" y="99" width="1" height="1" fill="#20d020"/><rect x="263" y="101" width="1" height="1" fill="#20d020"/><rect x="264" y="94" width="1" height="1" fill="#20d020"/><rect x="264" y="96" width="1" height="1" fill="#20d020"/><rect x="264" y="98" width="1" height="1" fill="#20d020"/><rect x="264" y="100" width="1" height="1" fill="#20d020"/><rect x="264" y="102" width="1" height="1" fill="#20d020"/><path d="M250 83H260L262 87L263.5 103H246.5L248 87Z" fill="#000" /><rect x="247" y="89" width="1" height="1" fill="#fff"/><rect x="247" y="91" width="1" height="1" fill="#fff"/><rect x="247" y="93" width="1" height="1" fill="#fff"/><rect x="247" y="95" width="1" height="1" fill="#fff"/><rect x="247" y="97" width="1" height="1" fill="#fff"/><rect x="247" y="99" width="1" height="1" fill="#fff"/><rect x="247" y="101" width="1" height="1" fill="#fff"/><rect x="248" y="88" width="1" height="1" fill="#fff"/><rect x="248" y="90" width="1" height="1" fill="#fff"/><rect x="248" y="92" width="1" height="1" fill="#fff"/><rect x="248" y="94" width="1" height="1" fill="#fff"/><rect x="248" y="96" width="1" height="1" fill="#fff"/><rect x="248" y="98" width="1" height="1" fill="#fff"/><rect x="248" y="100" width="1" height="1" fill="#fff"/><rect x="248" y="102" width="1" height="1" fill="#fff"/><rect x="249" y="89" width="1" height="1" fill="#fff"/><rect x="249" y="91" width="1" height="1" fill="#fff"/><rect x="249" y="93" width="1" height="1" fill="#fff"/><rect x="249" y="95" width="1" height="1" fill="#fff"/><rect x="249" y="97" width="1" height="1" fill="#fff"/><rect x="249" y="99" width="1" height="1" fill="#fff"/><rect x="249" y="101" width="1" height="1" fill="#fff"/><rect x="250" y="88" width="1" height="1" fill="#fff"/><rect x="250" y="90" width="1" height="1" fill="#fff"/><rect x="250" y="92" width="1" height="1" fill="#fff"/><rect x="250" y="94" width="1" height="1" fill="#fff"/><rect x="250" y="96" width="1" height="1" fill="#fff"/><rect x="250" y="98" width="1" height="1" fill="#fff"/><rect x="250" y="100" width="1" height="1" fill="#fff"/><rect x="250" y="102" width="1" height="1" fill="#fff"/><rect x="259" y="89" width="1" height="1" fill="#fff"/><rect x="259" y="91" width="1" height="1" fill="#fff"/><rect x="259" y="93" width="1" height="1" fill="#fff"/><rect x="259" y="95" width="1" height="1" fill="#fff"/><rect x="259" y="97" width="1" height="1" fill="#fff"/><rect x="259" y="99" width="1" height="1" fill="#fff"/><rect x="259" y="101" width="1" height="1" fill="#fff"/><rect x="260" y="88" width="1" height="1" fill="#fff"/><rect x="260" y="90" width="1" height="1" fill="#fff"/><rect x="260" y="92" width="1" height="1" fill="#fff"/><rect x="260" y="94" width="1" height="1" fill="#fff"/><rect x="260" y="96" width="1" height="1" fill="#fff"/><rect x="260" y="98" width="1" height="1" fill="#fff"/><rect x="260" y="100" width="1" height="1" fill="#fff"/><rect x="260" y="102" width="1" height="1" fill="#fff"/><rect x="261" y="89" width="1" height="1" fill="#fff"/><rect x="261" y="91" width="1" height="1" fill="#fff"/><rect x="261" y="93" width="1" height="1" fill="#fff"/><rect x="261" y="95" width="1" height="1" fill="#fff"/><rect x="261" y="97" width="1" height="1" fill="#fff"/><rect x="261" y="99" width="1" height="1" fill="#fff"/><rect x="261" y="101" width="1" height="1" fill="#fff"/><rect x="262" y="88" width="1" height="1" fill="#fff"/><rect x="262" y="90" width="1" height="1" fill="#fff"/><rect x="262" y="92" width="1" height="1" fill="#fff"/><rect x="262" y="94" width="1" height="1" fill="#fff"/><rect x="262" y="96" width="1" height="1" fill="#fff"/><rect x="262" y="98" width="1" height="1" fill="#fff"/><rect x="262" y="100" width="1" height="1" fill="#fff"/><rect x="262" y="102" width="1" height="1" fill="#fff"/><rect x="263" y="89" width="1" height="1" fill="#fff"/><rect x="263" y="91" width="1" height="1" fill="#fff"/><rect x="263" y="93" width="1" height="1" fill="#fff"/><rect x="263" y="95" width="1" height="1" fill="#fff"/><rect x="263" y="97" width="1" height="1" fill="#fff"/><rect x="263" y="99" width="1" height="1" fill="#fff"/><rect x="263" y="101" width="1" height="1" fill="#fff"/><path d="M251 85.5H256.5L257.5 91L255.5 94.5L252 93L250.5 89Z" fill="#fff" /><path d="M250.5 100Q255 95.5 259 100L259.5 103H250Z" fill="#fff" /><rect x="252" y="88" width="2" height="1" fill="#000"/><rect x="255" y="88" width="1" height="1" fill="#000"/><rect x="254" y="89" width="1" height="3" fill="#000"/><rect x="253" y="92" width="2" height="1" fill="#000"/><rect x="258" y="85" width="1" height="1" fill="#e0e000"/></svg></div>
<div class="a tb" style="left:275px;top:81px;width:24px;height:24px;"><svg class="px" style="left:-1px;top:-1px" width="24" height="24" viewBox="275 81 24 24"><rect x="279" y="85" width="15" height="17" fill="#0000ff"/><rect x="280" y="86" width="13" height="15" fill="#fff"/><rect x="281" y="88" width="4" height="2" fill="#000"/><rect x="287" y="88" width="1" height="2" fill="#000"/><rect x="290" y="88" width="2" height="2" fill="#000"/><rect x="281" y="91" width="4" height="2" fill="#000"/><rect x="287" y="91" width="1" height="2" fill="#000"/><rect x="290" y="91" width="2" height="2" fill="#000"/><rect x="281" y="94" width="4" height="2" fill="#000"/><rect x="287" y="94" width="1" height="2" fill="#000"/><rect x="290" y="94" width="2" height="2" fill="#000"/><rect x="281" y="97" width="4" height="2" fill="#000"/><rect x="287" y="97" width="1" height="2" fill="#000"/><rect x="290" y="97" width="2" height="2" fill="#000"/></svg></div>
<div class="a tb" style="left:299px;top:81px;width:24px;height:24px;"><svg class="" style="left:-1px;top:-1px" width="24" height="24" viewBox="299 81 24 24"><rect x="302" y="84" width="18" height="18" fill="#fff"/><rect x="303" y="85" width="16" height="16" fill="#000080"/><rect x="307.5" y="86" width="2.5" height="2" fill="#fff"/><rect x="308" y="88" width="1.2" height="8" fill="#fff"/><rect x="308" y="91" width="4" height="1" fill="#fff"/><rect x="308" y="93.5" width="6" height="1.1" fill="#fff"/><path d="M313.5 94L315.8 97.6H317.6" fill="none" stroke="#fff" stroke-width="1.2" /><rect x="314" y="88" width="3" height="4.5" fill="#fff"/><rect x="315" y="87" width="1" height="1" fill="#fff"/><path d="M306.6 91.3A4.3 4.3 0 1 0 313.6 96.6" fill="none" stroke="#fff" stroke-width="1.3" /></svg></div>
<div class="a tb" style="left:323px;top:81px;width:24px;height:24px;"><svg class="" style="left:-1px;top:-1px" width="24" height="24" viewBox="323 81 24 24"><rect x="329" y="84" width="15" height="18" fill="#a4a4a4"/><rect x="330" y="85" width="13" height="16" fill="#fff"/><rect x="327" y="86" width="4" height="2" fill="#8c8c00"/><rect x="327" y="90" width="4" height="2" fill="#8c8c00"/><rect x="327" y="94" width="4" height="2" fill="#8c8c00"/><rect x="327" y="98" width="4" height="2" fill="#8c8c00"/><rect x="333" y="86" width="3" height="3" fill="#000"/><rect x="333" y="91" width="3" height="3" fill="#000"/><rect x="334" y="96" width="2" height="2" fill="#000"/><path d="M333.5 87.5L335 88.5L337.5 85M333.5 92.5L335 93.5L337.5 90M332.5 95L337.5 100M337.5 95L332.5 100" fill="none" stroke="#f00000" stroke-width="1" /></svg></div>
<div class="a tb" style="left:347px;top:81px;width:24px;height:24px;"><svg class="" style="left:-1px;top:-1px" width="24" height="24" viewBox="347 81 24 24"><rect x="351" y="88" width="16" height="10" fill="#0000f0"/><rect x="353" y="89" width="14" height="8" fill="#fff"/><text x="353.3" y="96" font-family="Liberation Sans" font-weight="bold" font-size="7.2" fill="#0000f0" textLength="13" lengthAdjust="spacingAndGlyphs">100%</text></svg></div>
<div class="a tb" style="left:371px;top:81px;width:24px;height:24px;"><svg class="" style="left:-1px;top:-1px" width="24" height="24" viewBox="371 81 24 24"><rect x="374" y="84" width="18" height="18" fill="#fff"/><rect x="375" y="85" width="16" height="16" fill="#000080"/><rect x="379.5" y="86" width="2.5" height="2" fill="#fff"/><rect x="380" y="88" width="1.2" height="8" fill="#fff"/><rect x="380" y="91" width="4" height="1" fill="#fff"/><rect x="380" y="93.5" width="6" height="1.1" fill="#fff"/><path d="M385.5 94L387.8 97.6H389.6" fill="none" stroke="#fff" stroke-width="1.2" /><rect x="386" y="88" width="3" height="4.5" fill="#fff"/><rect x="387" y="87" width="1" height="1" fill="#fff"/><path d="M378.6 91.3A4.3 4.3 0 1 0 385.6 96.6" fill="none" stroke="#fff" stroke-width="1.3" /></svg></div>
<div class="a tb" style="left:395px;top:81px;width:24px;height:24px;"><svg class="" style="left:-1px;top:-1px" width="24" height="24" viewBox="395 81 24 24"><rect x="398" y="84" width="18" height="18" fill="#fff"/><rect x="399" y="85" width="16" height="16" fill="#000080"/><rect x="403.5" y="86" width="2.5" height="2" fill="#fff"/><rect x="404" y="88" width="1.2" height="8" fill="#fff"/><rect x="404" y="91" width="4" height="1" fill="#fff"/><rect x="404" y="93.5" width="6" height="1.1" fill="#fff"/><path d="M409.5 94L411.8 97.6H413.6" fill="none" stroke="#fff" stroke-width="1.2" /><rect x="410" y="88" width="3" height="4.5" fill="#fff"/><rect x="411" y="87" width="1" height="1" fill="#fff"/><path d="M402.6 91.3A4.3 4.3 0 1 0 409.6 96.6" fill="none" stroke="#fff" stroke-width="1.3" /></svg></div>
<div class="a tb" style="left:427px;top:81px;width:24px;height:24px;"><svg class="" style="left:-1px;top:-1px" width="24" height="24" viewBox="427 81 24 24"><text x="431.6" y="101.6" font-family="Liberation Sans" font-weight="bold" font-size="22" fill="#f00000" stroke="#f00000" stroke-width=".6">?</text></svg></div>
<div class="a tb" style="left:631px;top:81px;width:24px;height:24px;"><svg class="" style="left:-1px;top:-1px" width="24" height="24" viewBox="631 81 24 24"><path d="M636.5 88.5Q637 84.3 641 84.6Q645.5 85 644 89" fill="none" stroke="#f00000" stroke-width="2.3" /><path d="M637 95.5L639.5 93M636.5 99.5H639" fill="none" stroke="#f00000" stroke-width="2.5" /><circle cx="643.5" cy="92.5" r="3.6" fill="#e8f4ff" stroke="#303038" stroke-width="1"/><rect x="641.5" y="91" width="4" height="1.6" fill="#f00000"/><path d="M646.3 95.3L651 100" fill="none" stroke="#1428a8" stroke-width="2.2" /></svg></div>
<div class="a tb" style="left:680px;top:49px;width:24px;height:24px;"><svg class="" style="left:-1px;top:-1px" width="24" height="24" viewBox="680 49 24 24"><circle cx="691.7" cy="60.4" r="8.6" fill="#00000c" stroke="#4858a8" stroke-width="1.3"/><text x="685.6" y="63.8" font-family="Liberation Sans" font-weight="bold" font-size="9" fill="#fff" textLength="12.2" lengthAdjust="spacingAndGlyphs">plm</text></svg></div>
<div class="a tb" style="left:275px;top:49px;width:88px;height:24px;"></div>
<div class="a t" style="left:280.0px;top:54.15px;font-size:14px;line-height:14px;color:#202020;">New section</div>
<div class="a tb" style="left:363px;top:49px;width:93px;height:24px;"></div>
<div class="a t" style="left:368.0px;top:54.15px;font-size:14px;line-height:14px;color:#202020;letter-spacing:-0.4px;">New question</div>
<div class="a tb" style="left:457px;top:49px;width:94px;height:24px;"></div>
<div class="a t" style="left:460.0px;top:54.15px;font-size:14px;line-height:14px;color:#202020;letter-spacing:-0.3px;">New response</div>
<div class="a tb" style="left:552px;top:49px;width:63px;height:24px;"></div>
<div class="a t" style="left:560.5px;top:54.15px;font-size:14px;line-height:14px;color:#202020;letter-spacing:-0.5px;">Options</div>
<div class="a tb" style="left:616px;top:49px;width:63px;height:24px;"></div>
<div class="a t" style="left:622.0px;top:54.15px;font-size:14px;line-height:14px;color:#202020;letter-spacing:-0.3px;">Preview</div>
<div class="a tb" style="left:703px;top:49px;width:64px;height:24px;"></div>
<div class="a t" style="left:707.0px;top:54.15px;font-size:14px;line-height:14px;color:#202020;letter-spacing:-0.133px;">Special...</div>
<div class="a sunk" style="left:451px;top:81px;width:178px;height:23px;"></div>
<div class="a dd" style="left:612px;top:83px;width:15px;height:19px;"></div>
<div class="a" style="left:4px;top:108px;width:951px;height:1px;background:#fff"></div>
<div class="a" style="left:4px;top:109px;width:951px;height:1px;background:#000"></div>
<div class="a" style="left:4px;top:109px;width:1px;height:638px;background:#000"></div>
<div class="a" style="left:4px;top:746px;width:951px;height:1px;background:#000"></div>
<div class="a" style="left:5px;top:110px;width:322px;height:636px;background:#ec9b59"></div>
<div class="a" style="left:5px;top:110px;width:322px;height:62px;background:#e55350"></div>
<svg class="px" style="left:5px;top:172px" width="322" height="4" viewBox="0 0 322 4"><rect x="0" y="0" width="8" height="4" fill="#fff"/><rect x="12" y="0" width="8" height="4" fill="#fff"/><rect x="24" y="0" width="8" height="4" fill="#fff"/><rect x="36" y="0" width="8" height="4" fill="#fff"/><rect x="48" y="0" width="8" height="4" fill="#fff"/><rect x="60" y="0" width="8" height="4" fill="#fff"/><rect x="72" y="0" width="8" height="4" fill="#fff"/><rect x="85" y="0" width="8" height="4" fill="#fff"/><rect x="97" y="0" width="8" height="4" fill="#fff"/><rect x="109" y="0" width="8" height="4" fill="#fff"/><rect x="121" y="0" width="8" height="4" fill="#fff"/><rect x="133" y="0" width="8" height="4" fill="#fff"/><rect x="145" y="0" width="8" height="4" fill="#fff"/><rect x="157" y="0" width="8" height="4" fill="#fff"/><rect x="169" y="0" width="8" height="4" fill="#fff"/><rect x="181" y="0" width="8" height="4" fill="#fff"/><rect x="193" y="0" width="8" height="4" fill="#fff"/><rect x="205" y="0" width="8" height="4" fill="#fff"/><rect x="217" y="0" width="8" height="4" fill="#fff"/><rect x="229" y="0" width="8" height="4" fill="#fff"/><rect x="242" y="0" width="8" height="4" fill="#fff"/><rect x="254" y="0" width="8" height="4" fill="#fff"/><rect x="266" y="0" width="8" height="4" fill="#fff"/><rect x="278" y="0" width="8" height="4" fill="#fff"/><rect x="290" y="0" width="8" height="4" fill="#fff"/><rect x="302" y="0" width="8" height="4" fill="#fff"/><rect x="314" y="0" width="8" height="4" fill="#fff"/></svg>
<svg class="px" style="left:5px;top:620px" width="322" height="4" viewBox="0 0 322 4"><rect x="0" y="0" width="8" height="4" fill="#fff"/><rect x="12" y="0" width="8" height="4" fill="#fff"/><rect x="24" y="0" width="8" height="4" fill="#fff"/><rect x="36" y="0" width="8" height="4" fill="#fff"/><rect x="48" y="0" width="8" height="4" fill="#fff"/><rect x="60" y="0" width="8" height="4" fill="#fff"/><rect x="72" y="0" width="8" height="4" fill="#fff"/><rect x="85" y="0" width="8" height="4" fill="#fff"/><rect x="97" y="0" width="8" height="4" fill="#fff"/><rect x="109" y="0" width="8" height="4" fill="#fff"/><rect x="121" y="0" width="8" height="4" fill="#fff"/><rect x="133" y="0" width="8" height="4" fill="#fff"/><rect x="145" y="0" width="8" height="4" fill="#fff"/><rect x="157" y="0" width="8" height="4" fill="#fff"/><rect x="169" y="0" width="8" height="4" fill="#fff"/><rect x="181" y="0" width="8" height="4" fill="#fff"/><rect x="193" y="0" width="8" height="4" fill="#fff"/><rect x="205" y="0" width="8" height="4" fill="#fff"/><rect x="217" y="0" width="8" height="4" fill="#fff"/><rect x="229" y="0" width="8" height="4" fill="#fff"/><rect x="242" y="0" width="8" height="4" fill="#fff"/><rect x="254" y="0" width="8" height="4" fill="#fff"/><rect x="266" y="0" width="8" height="4" fill="#fff"/><rect x="278" y="0" width="8" height="4" fill="#fff"/><rect x="290" y="0" width="8" height="4" fill="#fff"/><rect x="302" y="0" width="8" height="4" fill="#fff"/><rect x="314" y="0" width="8" height="4" fill="#fff"/></svg>
<svg class="px" style="left:5px;top:659px" width="322" height="4" viewBox="0 0 322 4"><rect x="0" y="0" width="8" height="4" fill="#fff"/><rect x="12" y="0" width="8" height="4" fill="#fff"/><rect x="24" y="0" width="8" height="4" fill="#fff"/><rect x="36" y="0" width="8" height="4" fill="#fff"/><rect x="48" y="0" width="8" height="4" fill="#fff"/><rect x="60" y="0" width="8" height="4" fill="#fff"/><rect x="72" y="0" width="8" height="4" fill="#fff"/><rect x="85" y="0" width="8" height="4" fill="#fff"/><rect x="97" y="0" width="8" height="4" fill="#fff"/><rect x="109" y="0" width="8" height="4" fill="#fff"/><rect x="121" y="0" width="8" height="4" fill="#fff"/><rect x="133" y="0" width="8" height="4" fill="#fff"/><rect x="145" y="0" width="8" height="4" fill="#fff"/><rect x="157" y="0" width="8" height="4" fill="#fff"/><rect x="169" y="0" width="8" height="4" fill="#fff"/><rect x="181" y="0" width="8" height="4" fill="#fff"/><rect x="193" y="0" width="8" height="4" fill="#fff"/><rect x="205" y="0" width="8" height="4" fill="#fff"/><rect x="217" y="0" width="8" height="4" fill="#fff"/><rect x="229" y="0" width="8" height="4" fill="#fff"/><rect x="242" y="0" width="8" height="4" fill="#fff"/><rect x="254" y="0" width="8" height="4" fill="#fff"/><rect x="266" y="0" width="8" height="4" fill="#fff"/><rect x="278" y="0" width="8" height="4" fill="#fff"/><rect x="290" y="0" width="8" height="4" fill="#fff"/><rect x="302" y="0" width="8" height="4" fill="#fff"/><rect x="314" y="0" width="8" height="4" fill="#fff"/></svg>
<div class="a t" style="left:23.0px;top:130.22px;font-size:21px;line-height:21px;font-weight:bold;color:#fff;letter-spacing:0.136px;">Survey title</div>
<div class="a t" style="left:29.5px;top:186.46px;font-size:16px;line-height:16px;letter-spacing:-0.375px;">Write-in text</div>
<div class="a sunk" style="left:29px;top:203px;width:263px;height:54px;border-color:#8c96a4 #fbfbf6 #fbfbf6 #8c96a4"></div>
<div class="a" style="left:274px;top:205px;width:16px;height:50px;background:#fbfbfd"></div>
<div class="a" style="left:274px;top:205px;width:16px;height:16px;background:#efeee6;border:1px solid #fff;border-radius:3px;box-shadow:0 1px 0 #dddcd0"></div>
<svg style="left:277.5px;top:209.0px" width="9" height="8" viewBox="0 0 9 8"><path d="M1 5.5L4.5 2L8 5.5" stroke="#c9c7ba" stroke-width="2" fill="none"/></svg>
<div class="a" style="left:274px;top:239px;width:16px;height:16px;background:#efeee6;border:1px solid #fff;border-radius:3px;box-shadow:0 1px 0 #dddcd0"></div>
<svg style="left:277.5px;top:243.0px" width="9" height="8" viewBox="0 0 9 8"><path d="M1 2L4.5 5.5L8 2" stroke="#c9c7ba" stroke-width="2" fill="none"/></svg>
<div class="a t" style="left:29.5px;top:263.96px;font-size:16px;line-height:16px;letter-spacing:-0.389px;">Plain text</div>
<div class="a t" style="left:30.5px;top:285.96px;font-size:16px;line-height:16px;font-weight:bold;letter-spacing:-0.167px;">Single choice</div>
<div class="a" style="left:34px;top:307px;width:12px;height:12px;border-radius:50%;background:radial-gradient(circle at 60% 60%,#fff 0,#fff 45%,#e8e8e0 100%);border:1px solid;border-color:#848078 #f4f2ea #f4f2ea #848078;box-shadow:inset 1px 1px 1px #606060"></div>
<div class="a t" style="left:53.5px;top:305.96px;font-size:16px;line-height:16px;">One</div>
<div class="a" style="left:34px;top:327px;width:12px;height:12px;border-radius:50%;background:radial-gradient(circle at 60% 60%,#fff 0,#fff 45%,#e8e8e0 100%);border:1px solid;border-color:#848078 #f4f2ea #f4f2ea #848078;box-shadow:inset 1px 1px 1px #606060"></div>
<div class="a t" style="left:53.5px;top:325.96px;font-size:16px;line-height:16px;">Two</div>
<div class="a" style="left:34px;top:347px;width:12px;height:12px;border-radius:50%;background:radial-gradient(circle at 60% 60%,#fff 0,#fff 45%,#e8e8e0 100%);border:1px solid;border-color:#848078 #f4f2ea #f4f2ea #848078;box-shadow:inset 1px 1px 1px #606060"></div>
<div class="a t" style="left:53.5px;top:345.96px;font-size:16px;line-height:16px;letter-spacing:-0.475px;">Three</div>
<div class="a t" style="left:29.5px;top:368.96px;font-size:16px;line-height:16px;letter-spacing:-0.307px;">Write-in number</div>
<div class="a sunk" style="left:29px;top:386px;width:95px;height:22px;border-color:#8c96a4 #fbfbf6 #fbfbf6 #8c96a4"></div>
<div class="a t" style="left:29.5px;top:414.96px;font-size:16px;line-height:16px;letter-spacing:-0.131px;">Weighted score</div>
<div class="a" style="left:34px;top:435px;width:12px;height:12px;border-radius:50%;background:radial-gradient(circle at 60% 60%,#fff 0,#fff 45%,#e8e8e0 100%);border:1px solid;border-color:#848078 #f4f2ea #f4f2ea #848078;box-shadow:inset 1px 1px 1px #606060"></div>
<div class="a t" style="left:53.5px;top:433.96px;font-size:16px;line-height:16px;">One</div>
<div class="a" style="left:34px;top:455px;width:12px;height:12px;border-radius:50%;background:radial-gradient(circle at 60% 60%,#fff 0,#fff 45%,#e8e8e0 100%);border:1px solid;border-color:#848078 #f4f2ea #f4f2ea #848078;box-shadow:inset 1px 1px 1px #606060"></div>
<div class="a t" style="left:53.5px;top:453.96px;font-size:16px;line-height:16px;">Two</div>
<div class="a" style="left:34px;top:475px;width:12px;height:12px;border-radius:50%;background:radial-gradient(circle at 60% 60%,#fff 0,#fff 45%,#e8e8e0 100%);border:1px solid;border-color:#848078 #f4f2ea #f4f2ea #848078;box-shadow:inset 1px 1px 1px #606060"></div>
<div class="a t" style="left:53.5px;top:473.96px;font-size:16px;line-height:16px;letter-spacing:-0.475px;">Three</div>
<div class="a btn" style="left:29px;top:495px;width:141px;height:24px;"></div>
<div class="a t" style="left:52.2px;top:500.00px;font-size:13px;line-height:13px;">Clear responses</div>
<div class="a t" style="left:29.5px;top:525.46px;font-size:16px;line-height:16px;letter-spacing:-0.353px;">Check all that apply</div>
<div class="a" style="left:33px;top:545px;width:13px;height:13px;background:#fff;border:1px solid;border-color:#8a9098 #fff #fff #8a9098;box-shadow:inset 1px 1px 0 #585858,inset -1px -1px 0 #ece9d8"></div>
<div class="a t" style="left:53.5px;top:543.96px;font-size:16px;line-height:16px;">One</div>
<div class="a" style="left:33px;top:565px;width:13px;height:13px;background:#fff;border:1px solid;border-color:#8a9098 #fff #fff #8a9098;box-shadow:inset 1px 1px 0 #585858,inset -1px -1px 0 #ece9d8"></div>
<div class="a t" style="left:53.5px;top:563.96px;font-size:16px;line-height:16px;">Two</div>
<div class="a" style="left:33px;top:585px;width:13px;height:13px;background:#fff;border:1px solid;border-color:#8a9098 #fff #fff #8a9098;box-shadow:inset 1px 1px 0 #585858,inset -1px -1px 0 #ece9d8"></div>
<div class="a t" style="left:53.5px;top:583.96px;font-size:16px;line-height:16px;letter-spacing:-0.475px;">Three</div>
<div class="a btn" style="left:5px;top:629px;width:127px;height:24px;"></div>
<div class="a t" style="left:42.6px;top:634.30px;font-size:13px;line-height:13px;">[Previous]</div>
<div class="a btn" style="left:144px;top:629px;width:94px;height:24px;"></div>
<div class="a t" style="left:174.4px;top:634.30px;font-size:13px;line-height:13px;letter-spacing:0.38px;">[Next]</div>
<div class="a" style="left:327px;top:110px;width:17px;height:636px;background:#f8f8fc"></div>
<div class="a" style="left:329px;top:111px;width:14px;height:15px;background:#efeee6;border:1px solid #fff;border-radius:3px;box-shadow:0 1px 0 #dddcd0"></div>
<svg style="left:331.5px;top:114.5px" width="9" height="8" viewBox="0 0 9 8"><path d="M1 5.5L4.5 2L8 5.5" stroke="#c9c7ba" stroke-width="2" fill="none"/></svg>
<div class="a" style="left:329px;top:731px;width:14px;height:14px;background:#efeee6;border:1px solid #fff;border-radius:3px;box-shadow:0 1px 0 #dddcd0"></div>
<svg style="left:331.5px;top:734.0px" width="9" height="8" viewBox="0 0 9 8"><path d="M1 2L4.5 5.5L8 2" stroke="#c9c7ba" stroke-width="2" fill="none"/></svg>
<div class="a" style="left:344px;top:110px;width:3px;height:636px;background:linear-gradient(to right,#e4e4ee,#d2d2de)"></div>
<div class="a" style="left:347px;top:109px;width:225px;height:638px;background:#000"></div>
<div class="a" style="left:348px;top:111px;width:223px;height:634px;background:#fff"></div>
<div class="a" style="left:348px;top:111px;width:223px;height:617px;overflow:hidden">
<div class="a" style="left:7px;top:14px;width:1px;height:16px;background:#a0a0a8"></div>
<div class="a" style="left:7px;top:55px;width:1px;height:195px;background:#a0a0a8"></div>
<div class="a" style="left:7px;top:274px;width:1px;height:216px;background:#a0a0a8"></div>
<div class="a" style="left:7px;top:514px;width:1px;height:56px;background:#a0a0a8"></div>
<div class="a" style="left:22px;top:114px;width:1px;height:56px;background:#a0a0a8"></div>
<div class="a" style="left:8px;top:29px;width:7px;height:1px;background:#a0a0a8"></div>
<div class="a" style="left:8px;top:69px;width:7px;height:1px;background:#a0a0a8"></div>
<div class="a" style="left:8px;top:89px;width:7px;height:1px;background:#a0a0a8"></div>
<div class="a" style="left:8px;top:109px;width:7px;height:1px;background:#a0a0a8"></div>
<div class="a" style="left:23px;top:129px;width:7px;height:1px;background:#a0a0a8"></div>
<div class="a" style="left:23px;top:149px;width:7px;height:1px;background:#a0a0a8"></div>
<div class="a" style="left:23px;top:169px;width:7px;height:1px;background:#a0a0a8"></div>
<div class="a" style="left:8px;top:189px;width:7px;height:1px;background:#a0a0a8"></div>
<div class="a" style="left:8px;top:209px;width:7px;height:1px;background:#a0a0a8"></div>
<div class="a" style="left:8px;top:229px;width:7px;height:1px;background:#a0a0a8"></div>
<div class="a" style="left:8px;top:249px;width:7px;height:1px;background:#a0a0a8"></div>
<div class="a" style="left:8px;top:289px;width:7px;height:1px;background:#a0a0a8"></div>
<div class="a" style="left:8px;top:309px;width:7px;height:1px;background:#a0a0a8"></div>
<div class="a" style="left:8px;top:329px;width:7px;height:1px;background:#a0a0a8"></div>
<div class="a" style="left:8px;top:349px;width:7px;height:1px;background:#a0a0a8"></div>
<div class="a" style="left:8px;top:369px;width:7px;height:1px;background:#a0a0a8"></div>
<div class="a" style="left:8px;top:389px;width:7px;height:1px;background:#a0a0a8"></div>
<div class="a" style="left:8px;top:409px;width:7px;height:1px;background:#a0a0a8"></div>
<div class="a" style="left:8px;top:429px;width:7px;height:1px;background:#a0a0a8"></div>
<div class="a" style="left:8px;top:449px;width:7px;height:1px;background:#a0a0a8"></div>
<div class="a" style="left:8px;top:469px;width:7px;height:1px;background:#a0a0a8"></div>
<div class="a" style="left:8px;top:489px;width:7px;height:1px;background:#a0a0a8"></div>
<div class="a" style="left:8px;top:529px;width:7px;height:1px;background:#a0a0a8"></div>
<div class="a" style="left:8px;top:549px;width:7px;height:1px;background:#a0a0a8"></div>
<div class="a" style="left:8px;top:569px;width:7px;height:1px;background:#a0a0a8"></div>
<div class="a" style="left:3px;top:5px;width:9px;height:9px;background:#fff;border:1px solid #000"></div>
<div class="a" style="left:5px;top:9px;width:5px;height:1px;background:#000"></div>
<div class="a t" style="left:13.699999999999989px;top:3.00px;font-size:13px;line-height:13px;font-weight:bold;letter-spacing:0.022px;">C:\ezs04\questiontypes.ezf</div>
<svg class="px" style="left:18px;top:25.0px" width="11" height="11" viewBox="0 0 11 11"><rect x="0" y="0" width="11" height="11" fill="#f4f4f4"/><rect x="0" y="10" width="11" height="1" fill="#808080"/><rect x="10" y="0" width="1" height="11" fill="#808080"/><rect x="0" y="0" width="10" height="1" fill="#d8d8d8"/><rect x="0" y="0" width="1" height="10" fill="#d8d8d8"/><rect x="4" y="2" width="1" height="1" fill="#0000f0"/><rect x="5" y="2" width="1" height="1" fill="#0000f0"/><rect x="6" y="2" width="1" height="1" fill="#0000f0"/><rect x="3" y="3" width="1" height="1" fill="#0000f0"/><rect x="7" y="3" width="1" height="1" fill="#0000f0"/><rect x="7" y="4" width="1" height="1" fill="#0000f0"/><rect x="6" y="5" width="1" height="1" fill="#0000f0"/><rect x="5" y="6" width="1" height="1" fill="#0000f0"/><rect x="5" y="8" width="1" height="1" fill="#0000f0"/></svg>
<div class="a t" style="left:31.599999999999966px;top:23.00px;font-size:13px;line-height:13px;letter-spacing:0.15px;">Primary Key</div>
<div class="a" style="left:3px;top:45px;width:9px;height:9px;background:#fff;border:1px solid #000"></div>
<div class="a" style="left:5px;top:49px;width:5px;height:1px;background:#000"></div>
<svg class="px" style="left:14px;top:44.5px" width="11" height="12" viewBox="0 0 11 12"><path d="M.5 .5H7.5L10.5 3.5V11.5H.5Z" fill="#ffff00" stroke="#000"/><path d="M7.5 .5V3.5H10.5" fill="#fff" stroke="#000"/><rect x="2" y="4" width="5" height="1" fill="#800000"/><rect x="2" y="6" width="6" height="1" fill="#800000"/><rect x="2" y="8" width="6" height="1" fill="#800000"/></svg>
<div class="a t" style="left:28.5px;top:43.00px;font-size:13px;line-height:13px;font-weight:bold;letter-spacing:0.119px;">Survey title</div>
<svg class="px" style="left:18px;top:65.0px" width="12" height="11" viewBox="0 0 12 11"><rect x="0" y="0" width="12" height="11" fill="#808080"/><rect x="1" y="1" width="10" height="9" fill="#0000e0"/><text x="1.5" y="8.5" font-family="Liberation Sans" font-size="7.5" font-weight="bold" fill="#fff" textLength="9" lengthAdjust="spacingAndGlyphs">AB</text></svg>
<div class="a t" style="left:31.599999999999966px;top:63.00px;font-size:13px;line-height:13px;letter-spacing:0.166px;">Write-in text</div>
<svg class="px" style="left:18px;top:84.5px" width="12" height="12" viewBox="0 0 12 12"><path d="M1 12L6 1L11 12M3 8.5H9" stroke="#800080" stroke-width="1.6" fill="none"/></svg>
<div class="a t" style="left:31.599999999999966px;top:83.00px;font-size:13px;line-height:13px;letter-spacing:0.157px;">Plain text</div>
<div class="a" style="left:43px;top:100px;width:180px;height:19px;background:#b2b4bf"></div>
<div class="a" style="left:18px;top:105px;width:9px;height:9px;background:#fff;border:1px solid #000"></div>
<div class="a" style="left:20px;top:109px;width:5px;height:1px;background:#000"></div>
<svg class="px" style="left:29px;top:105.0px" width="11" height="11" viewBox="0 0 11 11"><circle cx="5.5" cy="5.5" r="5" fill="#fff" stroke="#000" stroke-width="1"/><circle cx="5.5" cy="5.5" r="2.6" fill="#000"/></svg>
<div class="a t" style="left:43.30000000000001px;top:103.00px;font-size:13px;line-height:13px;letter-spacing:0.031px;">Single choice</div>
<div class="a t" style="left:32.80000000000001px;top:123.00px;font-size:13px;line-height:13px;letter-spacing:-0.189px;">One</div>
<div class="a t" style="left:32.80000000000001px;top:143.00px;font-size:13px;line-height:13px;letter-spacing:-0.322px;">Two</div>
<div class="a t" style="left:32.80000000000001px;top:163.00px;font-size:13px;line-height:13px;letter-spacing:-0.517px;">Three</div>
<svg class="px" style="left:18px;top:184.5px" width="11" height="12" viewBox="0 0 11 12"><rect x="0" y="0" width="11" height="12" fill="#808080"/><rect x="1" y="1" width="9" height="10" fill="#fff"/><text x="3" y="10" font-family="Liberation Sans" font-size="9" font-weight="bold" fill="#0000e0">3</text></svg>
<div class="a t" style="left:31.599999999999966px;top:183.00px;font-size:13px;line-height:13px;letter-spacing:0.019px;">Write-in number</div>
<div class="a" style="left:18px;top:205px;width:9px;height:9px;background:#fff;border:1px solid #000"></div>
<div class="a" style="left:20px;top:209px;width:5px;height:1px;background:#000"></div>
<div class="a" style="left:22px;top:207px;width:1px;height:5px;background:#000"></div>
<svg class="px" style="left:29px;top:205.0px" width="11" height="11" viewBox="0 0 11 11"><circle cx="5.5" cy="5.5" r="5" fill="#ffff80" stroke="#000" stroke-width="1"/><rect x="3.5" y="3.5" width="1" height="1.3" fill="#000"/><rect x="6.5" y="3.5" width="1" height="1.3" fill="#000"/><path d="M3 6.5Q5.5 9.5 8 6.5" stroke="#000" stroke-width=".9" fill="none"/></svg>
<div class="a t" style="left:43.30000000000001px;top:203.00px;font-size:13px;line-height:13px;letter-spacing:0.039px;">Weighted score</div>
<svg class="px" style="left:18px;top:225.0px" width="12" height="11" viewBox="0 0 12 11"><rect x="0" y="0" width="12" height="11" fill="#b0b0b8"/><text x=".5" y="9" font-family="Liberation Sans" font-size="8.5" font-weight="bold" fill="#900090" textLength="11" lengthAdjust="spacingAndGlyphs">OK</text></svg>
<div class="a t" style="left:31.599999999999966px;top:223.00px;font-size:13px;line-height:13px;letter-spacing:-0.04px;">Clear responses</div>
<div class="a" style="left:18px;top:245px;width:9px;height:9px;background:#fff;border:1px solid #000"></div>
<div class="a" style="left:20px;top:249px;width:5px;height:1px;background:#000"></div>
<div class="a" style="left:22px;top:247px;width:1px;height:5px;background:#000"></div>
<svg class="px" style="left:29px;top:245.0px" width="11" height="11" viewBox="0 0 11 11"><rect x="0" y="0" width="11" height="11" fill="#000"/><rect x="1.5" y="1.5" width="8" height="8" fill="#fff"/><path d="M2 2L9 9M9 2L2 9" stroke="#000" stroke-width="1.3"/></svg>
<div class="a t" style="left:43.30000000000001px;top:243.00px;font-size:13px;line-height:13px;letter-spacing:0.071px;">Check all that apply</div>
<div class="a" style="left:3px;top:265px;width:9px;height:9px;background:#fff;border:1px solid #000"></div>
<div class="a" style="left:5px;top:269px;width:5px;height:1px;background:#000"></div>
<svg class="px" style="left:14px;top:264.5px" width="11" height="12" viewBox="0 0 11 12"><path d="M.5 .5H7.5L10.5 3.5V11.5H.5Z" fill="#ffff00" stroke="#000"/><path d="M7.5 .5V3.5H10.5" fill="#fff" stroke="#000"/><rect x="2" y="4" width="5" height="1" fill="#800000"/><rect x="2" y="6" width="6" height="1" fill="#800000"/><rect x="2" y="8" width="6" height="1" fill="#800000"/></svg>
<div class="a t" style="left:27.80000000000001px;top:263.00px;font-size:13px;line-height:13px;font-weight:bold;letter-spacing:0.416px;">Page 2</div>
<div class="a" style="left:18px;top:285px;width:9px;height:9px;background:#fff;border:1px solid #000"></div>
<div class="a" style="left:20px;top:289px;width:5px;height:1px;background:#000"></div>
<div class="a" style="left:22px;top:287px;width:1px;height:5px;background:#000"></div>
<svg class="px" style="left:29px;top:284.5px" width="11" height="12" viewBox="0 0 11 12"><rect x="0" y="0" width="11" height="3" fill="#000080"/><rect x="1" y="1" width="7" height="1" fill="#8080ff"/><rect x="9" y="0" width="2" height="3" fill="#000"/><rect x="1" y="3" width="9" height="9" fill="#0000c0"/><rect x="2" y="4" width="7" height="7" fill="#ffff00"/><rect x="3" y="5" width="5" height="1" fill="#0000c0"/><rect x="3" y="7" width="5" height="1" fill="#0000c0"/><rect x="3" y="9" width="5" height="1" fill="#0000c0"/></svg>
<div class="a t" style="left:43.30000000000001px;top:283.00px;font-size:13px;line-height:13px;letter-spacing:0.096px;">Single list</div>
<div class="a" style="left:18px;top:305px;width:9px;height:9px;background:#fff;border:1px solid #000"></div>
<div class="a" style="left:20px;top:309px;width:5px;height:1px;background:#000"></div>
<div class="a" style="left:22px;top:307px;width:1px;height:5px;background:#000"></div>
<svg class="px" style="left:29px;top:304.5px" width="10" height="12" viewBox="0 0 10 12"><rect x="0" y="0" width="10" height="12" fill="#0000c0"/><rect x="1" y="0" width="9" height="11" fill="#ffff00"/><rect x="2" y="1" width="6" height="2" fill="#000080"/><rect x="2" y="4" width="6" height="1" fill="#0000c0"/><rect x="2" y="6" width="6" height="2" fill="#000080"/><rect x="2" y="9" width="6" height="1" fill="#0000c0"/><rect x="9" y="0" width="1" height="11" fill="#404040"/></svg>
<div class="a t" style="left:43.30000000000001px;top:303.00px;font-size:13px;line-height:13px;letter-spacing:0.1px;">Multiple list</div>
<div class="a" style="left:18px;top:325px;width:9px;height:9px;background:#fff;border:1px solid #000"></div>
<div class="a" style="left:20px;top:329px;width:5px;height:1px;background:#000"></div>
<div class="a" style="left:22px;top:327px;width:1px;height:5px;background:#000"></div>
<svg class="px" style="left:29px;top:324.5px" width="11" height="12" viewBox="0 0 11 12"><rect x="0" y="0" width="10" height="4" fill="#2020a0"/><rect x="1" y="1" width="5" height="2" fill="#fff"/><rect x="7" y="1" width="2" height="2" fill="#c0c0ff"/><rect x="3" y="4" width="8" height="8" fill="#2020a0"/><rect x="4" y="5" width="6" height="6" fill="#ffff00"/><rect x="5" y="6" width="4" height="1" fill="#0000c0"/><rect x="5" y="8" width="4" height="1" fill="#0000c0"/></svg>
<div class="a t" style="left:43.30000000000001px;top:323.00px;font-size:13px;line-height:13px;letter-spacing:-0.061px;">Combo box</div>
<div class="a" style="left:18px;top:345px;width:9px;height:9px;background:#fff;border:1px solid #000"></div>
<div class="a" style="left:20px;top:349px;width:5px;height:1px;background:#000"></div>
<div class="a" style="left:22px;top:347px;width:1px;height:5px;background:#000"></div>
<svg class="px" style="left:29px;top:344.5px" width="11" height="12" viewBox="0 0 11 12"><rect x="1" y="0" width="10" height="12" fill="#ffff00"/><rect x="0" y="1" width="3" height="2" fill="#a06000"/><rect x="4" y="1" width="6" height="1" fill="#000"/><rect x="0" y="4" width="3" height="2" fill="#a06000"/><rect x="4" y="4" width="6" height="1" fill="#000"/><rect x="0" y="7" width="3" height="2" fill="#a06000"/><rect x="4" y="7" width="6" height="1" fill="#000"/><rect x="0" y="10" width="3" height="2" fill="#a06000"/><rect x="4" y="10" width="6" height="1" fill="#000"/></svg>
<div class="a t" style="left:43.30000000000001px;top:343.00px;font-size:13px;line-height:13px;letter-spacing:-0.157px;">Rank order</div>
<svg class="px" style="left:18px;top:365.0px" width="12" height="11" viewBox="0 0 12 11"><rect x="0" y="0" width="12" height="11" fill="#e0c000"/><rect x="1" y="1" width="10" height="9" fill="#0000e0"/><text x="1.5" y="8.5" font-family="Liberation Sans" font-size="7.5" font-weight="bold" fill="#fff" textLength="9" lengthAdjust="spacingAndGlyphs">AB</text></svg>
<div class="a t" style="left:31.599999999999966px;top:363.00px;font-size:13px;line-height:13px;letter-spacing:0.027px;">DATE</div>
<svg class="px" style="left:18px;top:385.0px" width="12" height="11" viewBox="0 0 12 11"><rect x="0" y="0" width="12" height="11" fill="#e0c000"/><rect x="1" y="1" width="10" height="9" fill="#0000e0"/><text x="1.5" y="8.5" font-family="Liberation Sans" font-size="7.5" font-weight="bold" fill="#fff" textLength="9" lengthAdjust="spacingAndGlyphs">AB</text></svg>
<div class="a t" style="left:31.599999999999966px;top:383.00px;font-size:13px;line-height:13px;letter-spacing:-0.321px;">TIME</div>
<svg class="px" style="left:18px;top:405.0px" width="11" height="11" viewBox="0 0 11 11"><rect x="0" y="0" width="11" height="11" fill="#f4f4f4"/><rect x="0" y="10" width="11" height="1" fill="#808080"/><rect x="10" y="0" width="1" height="11" fill="#808080"/><rect x="0" y="0" width="10" height="1" fill="#d8d8d8"/><rect x="0" y="0" width="1" height="10" fill="#d8d8d8"/><rect x="4" y="2" width="1" height="1" fill="#0000f0"/><rect x="5" y="2" width="1" height="1" fill="#0000f0"/><rect x="6" y="2" width="1" height="1" fill="#0000f0"/><rect x="3" y="3" width="1" height="1" fill="#0000f0"/><rect x="7" y="3" width="1" height="1" fill="#0000f0"/><rect x="7" y="4" width="1" height="1" fill="#0000f0"/><rect x="6" y="5" width="1" height="1" fill="#0000f0"/><rect x="5" y="6" width="1" height="1" fill="#0000f0"/><rect x="5" y="8" width="1" height="1" fill="#0000f0"/></svg>
<div class="a t" style="left:31.599999999999966px;top:403.00px;font-size:13px;line-height:13px;letter-spacing:-0.014px;">Email address for invitations</div>
<svg class="px" style="left:18px;top:425.0px" width="11" height="11" viewBox="0 0 11 11"><rect x="0" y="0" width="11" height="11" fill="#f4f4f4"/><rect x="0" y="10" width="11" height="1" fill="#808080"/><rect x="10" y="0" width="1" height="11" fill="#808080"/><rect x="0" y="0" width="10" height="1" fill="#d8d8d8"/><rect x="0" y="0" width="1" height="10" fill="#d8d8d8"/><rect x="4" y="2" width="1" height="1" fill="#0000f0"/><rect x="5" y="2" width="1" height="1" fill="#0000f0"/><rect x="6" y="2" width="1" height="1" fill="#0000f0"/><rect x="3" y="3" width="1" height="1" fill="#0000f0"/><rect x="7" y="3" width="1" height="1" fill="#0000f0"/><rect x="7" y="4" width="1" height="1" fill="#0000f0"/><rect x="6" y="5" width="1" height="1" fill="#0000f0"/><rect x="5" y="6" width="1" height="1" fill="#0000f0"/><rect x="5" y="8" width="1" height="1" fill="#0000f0"/></svg>
<div class="a t" style="left:31.599999999999966px;top:423.00px;font-size:13px;line-height:13px;letter-spacing:0.023px;">Record status: Sent invitation/Reminder</div>
<svg class="px" style="left:18px;top:445.0px" width="11" height="11" viewBox="0 0 11 11"><rect x="0" y="0" width="11" height="11" fill="#f4f4f4"/><rect x="0" y="10" width="11" height="1" fill="#808080"/><rect x="10" y="0" width="1" height="11" fill="#808080"/><rect x="0" y="0" width="10" height="1" fill="#d8d8d8"/><rect x="0" y="0" width="1" height="10" fill="#d8d8d8"/><rect x="4" y="2" width="1" height="1" fill="#0000f0"/><rect x="5" y="2" width="1" height="1" fill="#0000f0"/><rect x="6" y="2" width="1" height="1" fill="#0000f0"/><rect x="3" y="3" width="1" height="1" fill="#0000f0"/><rect x="7" y="3" width="1" height="1" fill="#0000f0"/><rect x="7" y="4" width="1" height="1" fill="#0000f0"/><rect x="6" y="5" width="1" height="1" fill="#0000f0"/><rect x="5" y="6" width="1" height="1" fill="#0000f0"/><rect x="5" y="8" width="1" height="1" fill="#0000f0"/></svg>
<div class="a t" style="left:31.599999999999966px;top:443.00px;font-size:13px;line-height:13px;letter-spacing:-0.002px;">Internet or email address of respondent</div>
<svg class="px" style="left:18px;top:465.0px" width="11" height="11" viewBox="0 0 11 11"><rect x="0" y="0" width="11" height="11" fill="#f4f4f4"/><rect x="0" y="10" width="11" height="1" fill="#808080"/><rect x="10" y="0" width="1" height="11" fill="#808080"/><rect x="0" y="0" width="10" height="1" fill="#d8d8d8"/><rect x="0" y="0" width="1" height="10" fill="#d8d8d8"/><rect x="4" y="2" width="1" height="1" fill="#0000f0"/><rect x="5" y="2" width="1" height="1" fill="#0000f0"/><rect x="6" y="2" width="1" height="1" fill="#0000f0"/><rect x="3" y="3" width="1" height="1" fill="#0000f0"/><rect x="7" y="3" width="1" height="1" fill="#0000f0"/><rect x="7" y="4" width="1" height="1" fill="#0000f0"/><rect x="6" y="5" width="1" height="1" fill="#0000f0"/><rect x="5" y="6" width="1" height="1" fill="#0000f0"/><rect x="5" y="8" width="1" height="1" fill="#0000f0"/></svg>
<div class="a t" style="left:31.599999999999966px;top:463.00px;font-size:13px;line-height:13px;letter-spacing:0.009px;">Date of data entry</div>
<svg class="px" style="left:18px;top:485.0px" width="11" height="11" viewBox="0 0 11 11"><rect x="0" y="0" width="11" height="11" fill="#f4f4f4"/><rect x="0" y="10" width="11" height="1" fill="#808080"/><rect x="10" y="0" width="1" height="11" fill="#808080"/><rect x="0" y="0" width="10" height="1" fill="#d8d8d8"/><rect x="0" y="0" width="1" height="10" fill="#d8d8d8"/><rect x="4" y="2" width="1" height="1" fill="#0000f0"/><rect x="5" y="2" width="1" height="1" fill="#0000f0"/><rect x="6" y="2" width="1" height="1" fill="#0000f0"/><rect x="3" y="3" width="1" height="1" fill="#0000f0"/><rect x="7" y="3" width="1" height="1" fill="#0000f0"/><rect x="7" y="4" width="1" height="1" fill="#0000f0"/><rect x="6" y="5" width="1" height="1" fill="#0000f0"/><rect x="5" y="6" width="1" height="1" fill="#0000f0"/><rect x="5" y="8" width="1" height="1" fill="#0000f0"/></svg>
<div class="a t" style="left:31.599999999999966px;top:483.00px;font-size:13px;line-height:13px;letter-spacing:-0.006px;">Time of data entry</div>
<div class="a" style="left:3px;top:505px;width:9px;height:9px;background:#fff;border:1px solid #000"></div>
<div class="a" style="left:5px;top:509px;width:5px;height:1px;background:#000"></div>
<svg class="px" style="left:14px;top:504.5px" width="11" height="12" viewBox="0 0 11 12"><path d="M.5 .5H7.5L10.5 3.5V11.5H.5Z" fill="#ffff00" stroke="#000"/><path d="M7.5 .5V3.5H10.5" fill="#fff" stroke="#000"/><rect x="2" y="4" width="5" height="1" fill="#800000"/><rect x="2" y="6" width="6" height="1" fill="#800000"/><rect x="2" y="8" width="6" height="1" fill="#800000"/></svg>
<div class="a t" style="left:27.80000000000001px;top:503.00px;font-size:13px;line-height:13px;font-weight:bold;letter-spacing:0.164px;">If you would like to continue this later</div>
<svg class="px" style="left:18px;top:525.0px" width="12" height="11" viewBox="0 0 12 11"><rect x="0" y="0" width="12" height="11" fill="#808080"/><rect x="1" y="1" width="10" height="9" fill="#0000e0"/><text x="1.5" y="8.5" font-family="Liberation Sans" font-size="7.5" font-weight="bold" fill="#fff" textLength="9" lengthAdjust="spacingAndGlyphs">AB</text></svg>
<div class="a t" style="left:31.599999999999966px;top:523.00px;font-size:13px;line-height:13px;letter-spacing:-0.009px;">Login name (such as your email address)</div>
<svg class="px" style="left:18px;top:545.5px" width="12" height="10" viewBox="0 0 12 10"><rect x="0" y="0" width="12" height="10" fill="#0000c0"/><rect x="1" y="2" width="10" height="6" fill="#fff"/><rect x="2" y="4" width="2" height="2" fill="#0000c0"/><rect x="5" y="4" width="2" height="2" fill="#0000c0"/><rect x="8" y="4" width="2" height="2" fill="#0000c0"/></svg>
<div class="a t" style="left:31.599999999999966px;top:543.00px;font-size:13px;line-height:13px;letter-spacing:-0.074px;">Login password</div>
<svg class="px" style="left:18px;top:565.0px" width="11" height="11" viewBox="0 0 11 11"><rect x="0" y="0" width="11" height="11" fill="#f4f4f4"/><rect x="0" y="10" width="11" height="1" fill="#808080"/><rect x="10" y="0" width="1" height="11" fill="#808080"/><rect x="0" y="0" width="10" height="1" fill="#d8d8d8"/><rect x="0" y="0" width="1" height="10" fill="#d8d8d8"/><rect x="4" y="2" width="1" height="1" fill="#0000f0"/><rect x="5" y="2" width="1" height="1" fill="#0000f0"/><rect x="6" y="2" width="1" height="1" fill="#0000f0"/><rect x="3" y="3" width="1" height="1" fill="#0000f0"/><rect x="7" y="3" width="1" height="1" fill="#0000f0"/><rect x="7" y="4" width="1" height="1" fill="#0000f0"/><rect x="6" y="5" width="1" height="1" fill="#0000f0"/><rect x="5" y="6" width="1" height="1" fill="#0000f0"/><rect x="5" y="8" width="1" height="1" fill="#0000f0"/></svg>
<div class="a t" style="left:31.599999999999966px;top:563.00px;font-size:13px;line-height:13px;letter-spacing:0.003px;">Session ID</div>
</div>
<div class="a" style="left:348px;top:728px;width:223px;height:17px;background:linear-gradient(to bottom,#f4f4f8,#fdfdff)"></div>
<div class="a" style="left:348px;top:728px;width:17px;height:17px;border:1px solid #9c9cb8;border-radius:2px;background:linear-gradient(to bottom,#ffffff 0%,#f0f0f6 30%,#cdcedc 75%,#c4c5d6 100%);box-shadow:0 0 0 1px #fff inset"></div>
<svg style="left:352.0px;top:732.0px" width="9" height="9" viewBox="0 0 9 9"><path d="M6 1L2.5 4.5L6 8" stroke="#34344a" stroke-width="2.2" fill="none"/></svg>
<div class="a" style="left:554px;top:728px;width:17px;height:17px;border:1px solid #9c9cb8;border-radius:2px;background:linear-gradient(to bottom,#ffffff 0%,#f0f0f6 30%,#cdcedc 75%,#c4c5d6 100%);box-shadow:0 0 0 1px #fff inset"></div>
<svg style="left:558.0px;top:732.0px" width="9" height="9" viewBox="0 0 9 9"><path d="M2.5 1L6 4.5L2.5 8" stroke="#34344a" stroke-width="2.2" fill="none"/></svg>
<div class="a" style="left:366px;top:728px;width:58px;height:17px;border:1px solid #9c9cb8;border-radius:2px;background:linear-gradient(to bottom,#ffffff 0%,#ececf4 40%,#c6c7d8 100%);box-shadow:0 0 0 1px #fff inset"></div>
<div class="a" style="left:389px;top:733px;width:1px;height:7px;background:#8c8ca8"></div>
<div class="a" style="left:391px;top:733px;width:1px;height:7px;background:#8c8ca8"></div>
<div class="a" style="left:393px;top:733px;width:1px;height:7px;background:#8c8ca8"></div>
<div class="a" style="left:395px;top:733px;width:1px;height:7px;background:#8c8ca8"></div>
<div class="a" style="left:572px;top:110px;width:382px;height:636px;background:#e0dfe3"></div>
<div class="a" style="left:572px;top:110px;width:4px;height:636px;background:#e8e8f0"></div>
<div class="a" style="left:954px;top:109px;width:1px;height:638px;background:#000"></div>
<div class="a t" style="left:578px;top:111.34px;font-size:12px;line-height:12px;letter-spacing:-0.1px;transform:scaleX(0.9);transform-origin:0 0;">The text of the question</div>
<div class="a btn" style="left:715px;top:110px;width:84px;height:13px;"></div>
<div class="a t" style="left:731.5px;top:111.34px;font-size:12px;line-height:12px;letter-spacing:-0.1px;transform:scaleX(0.9);transform-origin:0 0;">Edit HTML</div>
<div class="a sunk" style="left:577px;top:123px;width:372px;height:71px;"></div>
<div class="a t" style="left:579.4px;top:128.30px;font-size:13px;line-height:13px;letter-spacing:0.034px;">Single choice</div>
<div class="a t" style="left:577px;top:199.04px;font-size:12px;line-height:12px;letter-spacing:-0.162px;transform:scaleX(0.9);transform-origin:0 0;">A short description, for your use only</div>
<div class="a sunk" style="left:577px;top:211px;width:372px;height:23px;"></div>
<div class="a t" style="left:577px;top:238.24px;font-size:12px;line-height:12px;letter-spacing:-0.2px;transform:scaleX(0.9);transform-origin:0 0;">Question type</div>
<div class="a t" style="left:733.3px;top:240.84px;font-size:12px;line-height:12px;letter-spacing:-0.3px;transform:scaleX(0.9);transform-origin:0 0;">Fieldname</div>
<div class="a" style="left:577px;top:274px;width:210px;height:1px;background:#a9a9ad"></div>
<div class="a" style="left:577px;top:275px;width:210px;height:1px;background:#fff"></div>
<div class="a sunk" style="left:577px;top:253px;width:120px;height:23px;"></div>
<div class="a dd" style="left:678px;top:255px;width:17px;height:19px;"></div>
<div class="a t" style="left:583.4px;top:259.20px;font-size:13px;line-height:13px;letter-spacing:0.108px;width:94.60000000000002px;overflow:hidden;">Single choice</div>
<div class="a sunk" style="left:733px;top:253px;width:54px;height:20px;"></div>
<div class="a t" style="left:734.7px;top:256.84px;font-size:12px;line-height:12px;letter-spacing:0.4px;transform:scaleX(0.9);transform-origin:0 0;">Q3</div>
<div class="a t" style="left:575.8px;top:279.84px;font-size:12px;line-height:12px;letter-spacing:-0.156px;transform:scaleX(0.9);transform-origin:0 0;">For multi-page forms, change the next page</div>
<div class="a sunk" style="left:577px;top:295px;width:210px;height:23px;"></div>
<div class="a dd" style="left:768px;top:297px;width:17px;height:19px;"></div>
<div class="a t" style="left:575.8px;top:319.04px;font-size:12px;line-height:12px;letter-spacing:-0.11px;transform:scaleX(0.9);transform-origin:0 0;">Show a follow-up question after answering</div>
<div class="a sunk" style="left:577px;top:331px;width:210px;height:24px;"></div>
<div class="a dd" style="left:768px;top:333px;width:17px;height:20px;"></div>
<div class="a" style="left:793px;top:253px;width:1px;height:137px;background:#9d9da1"></div>
<div class="a" style="left:794px;top:253px;width:1px;height:137px;background:#fff"></div>
<div class="a" style="left:799px;top:253px;width:144px;height:1px;background:#9d9da1"></div>
<div class="a" style="left:799px;top:254px;width:144px;height:1px;background:#fff"></div>
<div class="a t" style="left:798.7px;top:261.04px;font-size:12px;line-height:12px;letter-spacing:-0.294px;transform:scaleX(0.9);transform-origin:0 0;">Question libraries</div>
<div class="a sunk" style="left:799px;top:274px;width:149px;height:22px;"></div>
<div class="a dd" style="left:929px;top:276px;width:17px;height:18px;"></div>
<div class="a btn" style="left:799px;top:295px;width:42px;height:20px;"></div>
<div class="a t" style="left:814.4px;top:298.84px;font-size:12px;line-height:12px;letter-spacing:-0.7px;transform:scaleX(0.9);transform-origin:0 0;">&lt;--</div>
<div class="a sunk" style="left:847px;top:295px;width:101px;height:23px;"></div>
<div class="a dd" style="left:929px;top:297px;width:17px;height:19px;"></div>
<div class="a t" style="left:798.7px;top:319.04px;font-size:12px;line-height:12px;letter-spacing:-0.2px;transform:scaleX(0.9);transform-origin:0 0;">Clipboard</div>
<div class="a btn" style="left:799px;top:331px;width:42px;height:20px;"></div>
<div class="a t" style="left:814.4px;top:334.84px;font-size:12px;line-height:12px;letter-spacing:-0.7px;transform:scaleX(0.9);transform-origin:0 0;">&lt;--</div>
<div class="a sunk" style="left:847px;top:331px;width:101px;height:23px;"></div>
<div class="a dd" style="left:929px;top:333px;width:17px;height:19px;"></div>
<div class="a t" style="left:798.0px;top:358.04px;font-size:12px;line-height:12px;letter-spacing:-0.056px;transform:scaleX(0.9);transform-origin:0 0;">Deleted questions</div>
<div class="a btn" style="left:799px;top:370px;width:42px;height:20px;"></div>
<div class="a t" style="left:814.4px;top:373.84px;font-size:12px;line-height:12px;letter-spacing:-0.7px;transform:scaleX(0.9);transform-origin:0 0;">&lt;--</div>
<div class="a sunk" style="left:847px;top:370px;width:101px;height:23px;"></div>
<div class="a dd" style="left:929px;top:372px;width:17px;height:19px;"></div>
<div class="a t" style="left:853.5px;top:375.70px;font-size:13px;line-height:13px;width:75.5px;overflow:hidden;">Single choice</div>
<div class="a" style="left:577px;top:409px;width:1px;height:337px;background:#fff"></div>
<div class="a t" style="left:585.3px;top:415.20px;font-size:13px;line-height:13px;">Typeface</div>
<div class="a sunk" style="left:585px;top:429px;width:311px;height:24px;"></div>
<div class="a dd" style="left:877px;top:431px;width:17px;height:20px;"></div>
<div class="a t" style="left:585.3px;top:463.20px;font-size:13px;line-height:13px;letter-spacing:0.288px;">Font size</div>
<div class="a sunk" style="left:585px;top:477px;width:311px;height:24px;"></div>
<div class="a dd" style="left:877px;top:479px;width:17px;height:20px;"></div>
<div class="a t" style="left:585.3px;top:511.20px;font-size:13px;line-height:13px;">Font color</div>
<div class="a sunk" style="left:585px;top:525px;width:311px;height:24px;"></div>
<div class="a dd" style="left:877px;top:527px;width:17px;height:20px;"></div>
<div class="a t" style="left:585.3px;top:559.20px;font-size:13px;line-height:13px;letter-spacing:-0.2px;">Appearance</div>
<div class="a" style="left:613px;top:573px;width:159px;height:109px;background:#fff"></div>
<div class="a" style="left:593px;top:578px;width:13px;height:13px;background:#fff;border:1px solid;border-color:#848078 #fff #fff #848078;box-shadow:inset 1px 1px 0 #404040,inset -1px -1px 0 #e8e6dc"></div>
<svg style="left:596px;top:581px" width="7" height="7" viewBox="0 0 7 7"><path d="M0 2.5L2.5 5L7 0.5" stroke="#000" stroke-width="2" fill="none"/></svg>
<div class="a" style="left:593px;top:601px;width:13px;height:13px;background:#fff;border:1px solid;border-color:#848078 #fff #fff #848078;box-shadow:inset 1px 1px 0 #404040,inset -1px -1px 0 #e8e6dc"></div>
<div class="a" style="left:593px;top:622px;width:13px;height:13px;background:#fff;border:1px solid;border-color:#848078 #fff #fff #848078;box-shadow:inset 1px 1px 0 #404040,inset -1px -1px 0 #e8e6dc"></div>
<div class="a" style="left:593px;top:642px;width:13px;height:13px;background:#fff;border:1px solid;border-color:#848078 #fff #fff #848078;box-shadow:inset 1px 1px 0 #404040,inset -1px -1px 0 #e8e6dc"></div>
<div class="a" style="left:593px;top:664px;width:13px;height:13px;background:#fff;border:1px solid;border-color:#848078 #fff #fff #848078;box-shadow:inset 1px 1px 0 #404040,inset -1px -1px 0 #e8e6dc"></div>
<div class="a t" style="left:621px;top:574.89px;font-size:19px;line-height:19px;font-weight:bold;font-family:'Liberation Serif',serif;">Bold</div>
<div class="a t" style="left:621px;top:597.09px;font-size:19px;line-height:19px;letter-spacing:0.8px;font-family:'Liberation Serif',serif;font-style:italic;">Italic</div>
<div class="a t" style="left:620.0px;top:620.35px;font-size:16.5px;line-height:16.5px;color:#2a2a2a;letter-spacing:0.325px;font-family:'Liberation Mono',monospace;">Monospace</div>
<div class="a t" style="left:620.0px;top:638.69px;font-size:19px;line-height:19px;letter-spacing:0.463px;font-family:'Liberation Serif',serif;text-decoration:underline;">Underline</div>
<div class="a t" style="left:621px;top:661.32px;font-size:18px;line-height:18px;font-weight:bold;font-family:'Liberation Serif',serif;text-decoration:line-through;">Strikeout</div>
<div class="a" style="left:610px;top:573px;width:2px;height:21px;background:repeating-linear-gradient(to bottom,#404040 0,#404040 1px,transparent 1px,transparent 2px)"></div>
<svg style="left:600.5px;top:584.5px" width="13" height="21" viewBox="0 0 13 21"><path d="M.5 .5V16.5L4.2 13L7 19.5L9.3 18.5L6.5 12.2H11.5Z" fill="#fff" stroke="#000" stroke-width="1"/></svg>
<div class="a t" style="left:585.4px;top:692.20px;font-size:13px;line-height:13px;letter-spacing:0.048px;">[ALT] Short question description</div>
<div class="a sunk" style="left:586px;top:707px;width:309px;height:22px;"></div>
<div class="a" style="left:931px;top:409px;width:18px;height:333px;background:linear-gradient(to right,#f2f2f8,#fdfdff)"></div>
<div class="a" style="left:931px;top:409px;width:1px;height:333px;background:#a8a8b8"></div>
<div class="a" style="left:932px;top:409px;width:1px;height:333px;background:#fff"></div>
<div class="a" style="left:933px;top:409px;width:16px;height:17px;border:1px solid #9c9cb8;border-radius:2px;background:linear-gradient(to bottom,#ffffff 0%,#f0f0f6 30%,#cdcedc 75%,#c4c5d6 100%);box-shadow:0 0 0 1px #fff inset"></div>
<svg style="left:936.5px;top:413.0px" width="9" height="9" viewBox="0 0 9 9"><path d="M1 6L4.5 2.5L8 6" stroke="#34344a" stroke-width="2.2" fill="none"/></svg>
<div class="a" style="left:933px;top:724px;width:16px;height:17px;border:1px solid #9c9cb8;border-radius:2px;background:linear-gradient(to bottom,#ffffff 0%,#f0f0f6 30%,#cdcedc 75%,#c4c5d6 100%);box-shadow:0 0 0 1px #fff inset"></div>
<svg style="left:936.5px;top:728.0px" width="9" height="9" viewBox="0 0 9 9"><path d="M1 2.5L4.5 6L8 2.5" stroke="#34344a" stroke-width="2.2" fill="none"/></svg>
<div class="a" style="left:933px;top:427px;width:16px;height:169px;border:1px solid #9c9cb8;border-radius:2px;background:linear-gradient(to right,#ffffff 0%,#ececf4 40%,#c4c5d6 100%);box-shadow:0 0 0 1px #fff inset"></div>
<div class="a" style="left:937px;top:508px;width:8px;height:1px;background:#8c8ca8"></div>
<div class="a" style="left:937px;top:510px;width:8px;height:1px;background:#8c8ca8"></div>
<div class="a" style="left:937px;top:512px;width:8px;height:1px;background:#8c8ca8"></div>
<div class="a" style="left:937px;top:514px;width:8px;height:1px;background:#8c8ca8"></div>
</body></html>
